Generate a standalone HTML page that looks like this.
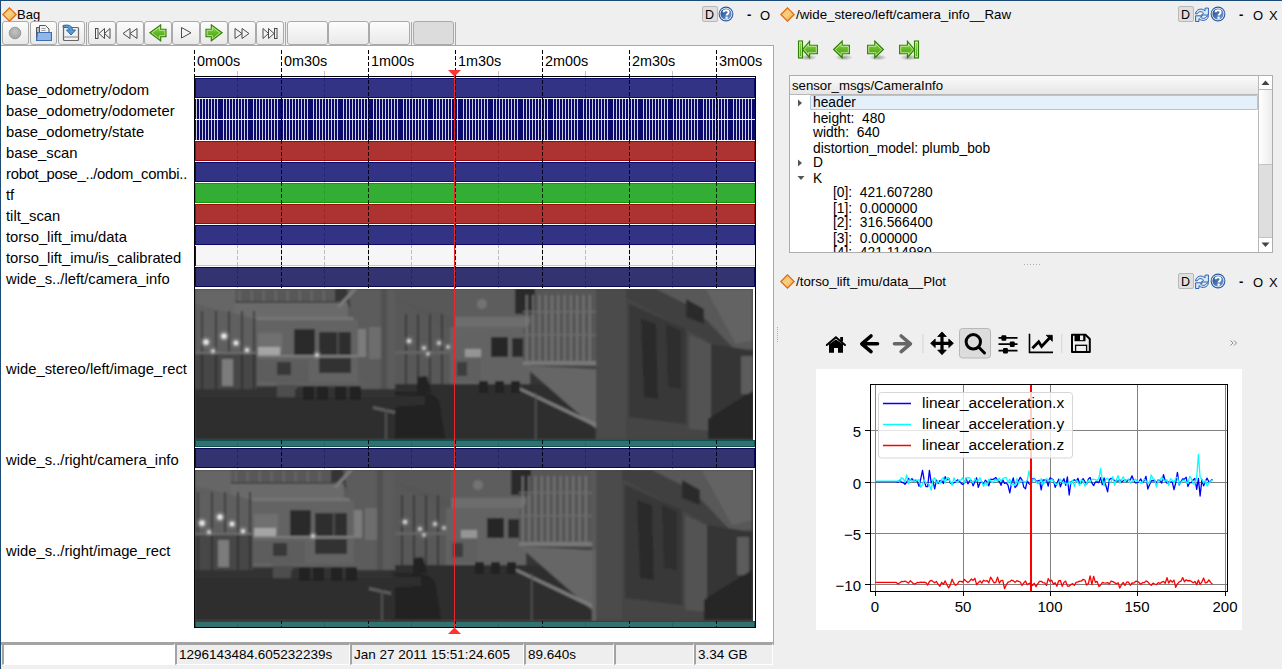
<!DOCTYPE html>
<html><head><meta charset="utf-8">
<style>
*{box-sizing:border-box}
html,body{margin:0;padding:0}
body{width:1282px;height:669px;background:#efefef;position:relative;overflow:hidden;font-family:"Liberation Sans",sans-serif;color:#000}
.a{position:absolute}
.t{position:absolute;white-space:pre;line-height:1}
.btn{position:absolute;top:21px;height:24px;border:1px solid #aaaaaa;border-radius:3px;background:linear-gradient(#fcfcfc,#e9e9e9)}
.lbl{position:absolute;left:6px;font-size:14.8px;white-space:pre;line-height:1}
.sf{position:absolute;top:643px;height:22px;border-top:2px solid #a3a3a3;border-left:2px solid #a3a3a3;border-right:1px solid #fff;border-bottom:1px solid #fff;background:#eeeeee;font-size:13.5px;white-space:pre;line-height:1}
.sf span{position:absolute;left:2px;top:3px}
</style></head><body>

<svg width="0" height="0" style="position:absolute"><defs><linearGradient id="gg" x1="0" y1="0" x2="0" y2="1"><stop offset="0" stop-color="#8ad34a"/><stop offset="0.5" stop-color="#52a81a"/><stop offset="1" stop-color="#3c8c0c"/></linearGradient><linearGradient id="gg2" x1="0" y1="0" x2="0" y2="1"><stop offset="0" stop-color="#94dc55"/><stop offset="0.55" stop-color="#5fb324"/><stop offset="1" stop-color="#489a12"/></linearGradient><radialGradient id="shd" cx="0.5" cy="0.5" r="0.5"><stop offset="0" stop-color="#000" stop-opacity="0.35"/><stop offset="1" stop-color="#000" stop-opacity="0"/></radialGradient></defs></svg>
<div class="a" style="left:0;top:0;width:1282px;height:1px;background:#1d4b77"></div>
<div class="a" style="left:0;top:0;width:1px;height:669px;background:#1d4b77"></div>
<svg class="a" style="left:2px;top:7px" width="15" height="15" viewBox="0 0 15 15"><defs><linearGradient id="dg" x1="0" y1="0" x2="1" y2="1"><stop offset="0" stop-color="#f6b94a"/><stop offset="0.5" stop-color="#f8cf86"/><stop offset="1" stop-color="#ee9d2a"/></linearGradient></defs><path d="M7.5 0.8 L14.2 7.5 L7.5 14.2 L0.8 7.5 Z" fill="url(#dg)" stroke="#dc6a12" stroke-width="1.2"/></svg>
<div class="t" style="left:17px;top:8px;font-size:13px;letter-spacing:0px">Bag</div>
<div class="btn" style="left:2px;width:27px;"></div>
<div class="btn" style="left:30px;width:27px;"></div>
<div class="btn" style="left:58px;width:27px;"></div>
<div class="btn" style="left:88px;width:28px;"></div>
<div class="btn" style="left:116px;width:28px;"></div>
<div class="btn" style="left:144px;width:28px;"></div>
<div class="btn" style="left:172px;width:28px;"></div>
<div class="btn" style="left:200px;width:28px;"></div>
<div class="btn" style="left:228px;width:28px;"></div>
<div class="btn" style="left:256px;width:28px;"></div>
<div class="btn" style="left:287px;width:41px;"></div>
<div class="btn" style="left:328px;width:41px;"></div>
<div class="btn" style="left:369px;width:41px;"></div>
<div class="btn" style="left:413px;width:41px;background:#dcdcdc;"></div>
<div class="a" style="left:86px;top:22px;width:1px;height:23px;background:#a8a8a8"></div>
<div class="a" style="left:285px;top:22px;width:1px;height:23px;background:#a8a8a8"></div>
<div class="a" style="left:411px;top:22px;width:1px;height:23px;background:#a8a8a8"></div>
<div class="a" style="left:455px;top:22px;width:1px;height:23px;background:#a8a8a8"></div>
<svg class="a" style="left:8px;top:26px" width="14" height="14"><defs><radialGradient id="rg" cx="0.5" cy="0.4" r="0.6"><stop offset="0" stop-color="#c4c4c4"/><stop offset="1" stop-color="#a2a2a2"/></radialGradient></defs><circle cx="7" cy="7" r="5.8" fill="url(#rg)" stroke="#9a9a9a" stroke-width="1"/></svg>
<svg class="a" style="left:35px;top:24px" width="17" height="18"><path d="M1.5 3.5 h3 v12 h-3 z" fill="#bdbdbd" stroke="#555" stroke-width="1"/><path d="M4.5 1.5 h6 l3.5 3.5 v5 h-9.5 z" fill="#f4f4f4" stroke="#555" stroke-width="1"/><path d="M6.5 4.5 h4 M6.5 6.5 h4" stroke="#888" stroke-width="0.8"/><path d="M1.5 16.5 L2.5 8.5 h14 v8 z" fill="#93b6e3" stroke="#3a6fb8" stroke-width="1.2"/></svg>
<svg class="a" style="left:62px;top:24px" width="18" height="18"><rect x="1.5" y="3.5" width="15" height="13" rx="1" fill="#f0f0f0" stroke="#666" stroke-width="1.2"/><path d="M2 13 h14" stroke="#bbb" stroke-width="2"/><path d="M1 1.5 C6 0.5 10 1 10.5 6 L13.5 6 L9 11 L4.5 6 L7.5 6 C7 3.5 4 3 1 3.5 Z" fill="#5a9bd0" stroke="#2a6aa5" stroke-width="1"/></svg>
<svg class="a" style="left:94px;top:27px;overflow:visible" width="16" height="13" viewBox="0 0 16 13"><rect x="1.5" y="1.5" width="2.5" height="10" fill="#f4f4f4" stroke="#4a4a4a" stroke-width="1"/><path d="M5 6.5 L10.5 1.5 L10.5 11.5 Z" fill="#f4f4f4" stroke="#4a4a4a" stroke-width="1"/><path d="M10.5 6.5 L16 1.5 L16 11.5 Z" fill="#f4f4f4" stroke="#4a4a4a" stroke-width="1"/></svg>
<svg class="a" style="left:122px;top:27px;overflow:visible" width="16" height="13" viewBox="0 0 16 13"><path d="M1 6.5 L8 1.5 L8 11.5 Z" fill="#f4f4f4" stroke="#4a4a4a" stroke-width="1"/><path d="M8 6.5 L15 1.5 L15 11.5 Z" fill="#f4f4f4" stroke="#4a4a4a" stroke-width="1"/></svg>
<svg class="a" style="left:149px;top:24px;overflow:visible" width="18" height="18" viewBox="0 0 18 18"><path d="M0.9 8.8 L11.7 0.9 L11.7 5.2 L17 5.2 L17 12.7 L11.7 12.7 L11.7 17 Z" fill="url(#gg2)" stroke="#2f7f05" stroke-width="1.1"/><path d="M2.8 8.8 L10.6 3.1 L10.6 6.3 L15.9 6.3 L15.9 11.6 L10.6 11.6 L10.6 14.8 Z" fill="none" stroke="#c9f2a2" stroke-width="0.9" opacity="0.85"/></svg>
<svg class="a" style="left:180px;top:26px;overflow:visible" width="12" height="13" viewBox="0 0 12 13"><path d="M11 6.75 L1.5 1.5 L1.5 12 Z" fill="#f4f4f4" stroke="#4a4a4a" stroke-width="1"/></svg>
<svg class="a" style="left:205px;top:24px;overflow:visible" width="18" height="18" viewBox="0 0 18 18"><path d="M17.1 8.8 L6.3 0.9 L6.3 5.2 L1 5.2 L1 12.7 L6.3 12.7 L6.3 17 Z" fill="url(#gg2)" stroke="#2f7f05" stroke-width="1.1"/><path d="M15.2 8.8 L7.4 3.1 L7.4 6.3 L2.1 6.3 L2.1 11.6 L7.4 11.6 L7.4 14.8 Z" fill="none" stroke="#c9f2a2" stroke-width="0.9" opacity="0.85"/></svg>
<svg class="a" style="left:234px;top:27px;overflow:visible" width="16" height="13" viewBox="0 0 16 13"><path d="M8 6.5 L1 1.5 L1 11.5 Z" fill="#f4f4f4" stroke="#4a4a4a" stroke-width="1"/><path d="M15 6.5 L8 1.5 L8 11.5 Z" fill="#f4f4f4" stroke="#4a4a4a" stroke-width="1"/></svg>
<svg class="a" style="left:262px;top:27px;overflow:visible" width="16" height="13" viewBox="0 0 16 13"><path d="M6.5 6.5 L1 1.5 L1 11.5 Z" fill="#f4f4f4" stroke="#4a4a4a" stroke-width="1"/><path d="M12 6.5 L6.5 1.5 L6.5 11.5 Z" fill="#f4f4f4" stroke="#4a4a4a" stroke-width="1"/><rect x="12.5" y="1.5" width="2.5" height="10" fill="#f4f4f4" stroke="#4a4a4a" stroke-width="1"/></svg>
<div class="a" style="left:1px;top:45px;width:773px;height:600px;background:#fff;border-top:1px solid #a8a8a8;border-right:1px solid #a8a8a8;border-bottom:3px solid #a3a3a3"></div>
<div class="t" style="left:197px;top:54px;font-size:14.4px">0m00s</div>
<div class="t" style="left:284px;top:54px;font-size:14.4px">0m30s</div>
<div class="t" style="left:371px;top:54px;font-size:14.4px">1m00s</div>
<div class="t" style="left:458px;top:54px;font-size:14.4px">1m30s</div>
<div class="t" style="left:545px;top:54px;font-size:14.4px">2m00s</div>
<div class="t" style="left:632px;top:54px;font-size:14.4px">2m30s</div>
<div class="t" style="left:719px;top:54px;font-size:14.4px">3m00s</div>
<svg class="a" style="left:0;top:0" width="1282" height="669"><rect x="237" y="71" width="1" height="5" fill="#c4c4c4"/><line x1="237.5" y1="77" x2="237.5" y2="628" stroke="#bdbdbd" stroke-width="1" stroke-dasharray="4 2"/><rect x="324" y="71" width="1" height="5" fill="#c4c4c4"/><line x1="324.5" y1="77" x2="324.5" y2="628" stroke="#bdbdbd" stroke-width="1" stroke-dasharray="4 2"/><rect x="411" y="71" width="1" height="5" fill="#c4c4c4"/><line x1="411.5" y1="77" x2="411.5" y2="628" stroke="#bdbdbd" stroke-width="1" stroke-dasharray="4 2"/><rect x="498" y="71" width="1" height="5" fill="#c4c4c4"/><line x1="498.5" y1="77" x2="498.5" y2="628" stroke="#bdbdbd" stroke-width="1" stroke-dasharray="4 2"/><rect x="585" y="71" width="1" height="5" fill="#c4c4c4"/><line x1="585.5" y1="77" x2="585.5" y2="628" stroke="#bdbdbd" stroke-width="1" stroke-dasharray="4 2"/><rect x="672" y="71" width="1" height="5" fill="#c4c4c4"/><line x1="672.5" y1="77" x2="672.5" y2="628" stroke="#bdbdbd" stroke-width="1" stroke-dasharray="4 2"/><line x1="194.5" y1="50" x2="194.5" y2="628" stroke="#000" stroke-width="1" stroke-dasharray="4 2"/><line x1="281.5" y1="50" x2="281.5" y2="628" stroke="#000" stroke-width="1" stroke-dasharray="4 2"/><line x1="368.5" y1="50" x2="368.5" y2="628" stroke="#000" stroke-width="1" stroke-dasharray="4 2"/><line x1="455.5" y1="50" x2="455.5" y2="628" stroke="#000" stroke-width="1" stroke-dasharray="4 2"/><line x1="542.5" y1="50" x2="542.5" y2="628" stroke="#000" stroke-width="1" stroke-dasharray="4 2"/><line x1="629.5" y1="50" x2="629.5" y2="628" stroke="#000" stroke-width="1" stroke-dasharray="4 2"/><line x1="716.5" y1="50" x2="716.5" y2="628" stroke="#000" stroke-width="1" stroke-dasharray="4 2"/></svg>
<div class="lbl" style="top:83px;letter-spacing:0px">base_odometry/odom</div>
<div class="a" style="left:195px;top:78px;width:560px;height:20px;background:rgba(0,0,102,0.8);box-shadow:inset 0 0 0 1px rgba(0,0,102,0.8)"></div>
<div class="lbl" style="top:104px;letter-spacing:0px">base_odometry/odometer</div>
<svg class="a" style="left:195px;top:99px" width="560" height="20"><rect x="0" y="0" width="560" height="20" fill="rgba(0,0,102,0.96)"/><rect x="1" y="0" width="1" height="20" fill="rgba(255,255,255,0.8)"/><rect x="4" y="0" width="1" height="20" fill="rgba(255,255,255,0.8)"/><rect x="7" y="0" width="1" height="20" fill="rgba(255,255,255,0.8)"/><rect x="10" y="0" width="1" height="20" fill="rgba(255,255,255,0.8)"/><rect x="13" y="0" width="1" height="20" fill="rgba(255,255,255,0.8)"/><rect x="16" y="0" width="1" height="20" fill="rgba(255,255,255,0.8)"/><rect x="19" y="0" width="1" height="20" fill="rgba(255,255,255,0.8)"/><rect x="22" y="0" width="1" height="20" fill="rgba(255,255,255,0.8)"/><rect x="28" y="0" width="1" height="20" fill="rgba(255,255,255,0.8)"/><rect x="31" y="0" width="1" height="20" fill="rgba(255,255,255,0.8)"/><rect x="34" y="0" width="1" height="20" fill="rgba(255,255,255,0.8)"/><rect x="37" y="0" width="1" height="20" fill="rgba(255,255,255,0.8)"/><rect x="40" y="0" width="1" height="20" fill="rgba(255,255,255,0.8)"/><rect x="43" y="0" width="1" height="20" fill="rgba(255,255,255,0.8)"/><rect x="46" y="0" width="1" height="20" fill="rgba(255,255,255,0.8)"/><rect x="49" y="0" width="1" height="20" fill="rgba(255,255,255,0.8)"/><rect x="52" y="0" width="1" height="20" fill="rgba(255,255,255,0.8)"/><rect x="58" y="0" width="1" height="20" fill="rgba(255,255,255,0.8)"/><rect x="61" y="0" width="1" height="20" fill="rgba(255,255,255,0.8)"/><rect x="64" y="0" width="1" height="20" fill="rgba(255,255,255,0.8)"/><rect x="67" y="0" width="1" height="20" fill="rgba(255,255,255,0.8)"/><rect x="70" y="0" width="1" height="20" fill="rgba(255,255,255,0.8)"/><rect x="73" y="0" width="1" height="20" fill="rgba(255,255,255,0.8)"/><rect x="76" y="0" width="1" height="20" fill="rgba(255,255,255,0.8)"/><rect x="79" y="0" width="1" height="20" fill="rgba(255,255,255,0.8)"/><rect x="82" y="0" width="1" height="20" fill="rgba(255,255,255,0.8)"/><rect x="88" y="0" width="1" height="20" fill="rgba(255,255,255,0.8)"/><rect x="91" y="0" width="1" height="20" fill="rgba(255,255,255,0.8)"/><rect x="94" y="0" width="1" height="20" fill="rgba(255,255,255,0.8)"/><rect x="97" y="0" width="1" height="20" fill="rgba(255,255,255,0.8)"/><rect x="100" y="0" width="1" height="20" fill="rgba(255,255,255,0.8)"/><rect x="103" y="0" width="1" height="20" fill="rgba(255,255,255,0.8)"/><rect x="106" y="0" width="1" height="20" fill="rgba(255,255,255,0.8)"/><rect x="109" y="0" width="1" height="20" fill="rgba(255,255,255,0.8)"/><rect x="112" y="0" width="1" height="20" fill="rgba(255,255,255,0.8)"/><rect x="118" y="0" width="1" height="20" fill="rgba(255,255,255,0.8)"/><rect x="121" y="0" width="1" height="20" fill="rgba(255,255,255,0.8)"/><rect x="124" y="0" width="1" height="20" fill="rgba(255,255,255,0.8)"/><rect x="127" y="0" width="1" height="20" fill="rgba(255,255,255,0.8)"/><rect x="130" y="0" width="1" height="20" fill="rgba(255,255,255,0.8)"/><rect x="133" y="0" width="1" height="20" fill="rgba(255,255,255,0.8)"/><rect x="136" y="0" width="1" height="20" fill="rgba(255,255,255,0.8)"/><rect x="139" y="0" width="1" height="20" fill="rgba(255,255,255,0.8)"/><rect x="142" y="0" width="1" height="20" fill="rgba(255,255,255,0.8)"/><rect x="148" y="0" width="1" height="20" fill="rgba(255,255,255,0.8)"/><rect x="151" y="0" width="1" height="20" fill="rgba(255,255,255,0.8)"/><rect x="154" y="0" width="1" height="20" fill="rgba(255,255,255,0.8)"/><rect x="157" y="0" width="1" height="20" fill="rgba(255,255,255,0.8)"/><rect x="160" y="0" width="1" height="20" fill="rgba(255,255,255,0.8)"/><rect x="163" y="0" width="1" height="20" fill="rgba(255,255,255,0.8)"/><rect x="166" y="0" width="1" height="20" fill="rgba(255,255,255,0.8)"/><rect x="169" y="0" width="1" height="20" fill="rgba(255,255,255,0.8)"/><rect x="172" y="0" width="1" height="20" fill="rgba(255,255,255,0.8)"/><rect x="178" y="0" width="1" height="20" fill="rgba(255,255,255,0.8)"/><rect x="181" y="0" width="1" height="20" fill="rgba(255,255,255,0.8)"/><rect x="184" y="0" width="1" height="20" fill="rgba(255,255,255,0.8)"/><rect x="187" y="0" width="1" height="20" fill="rgba(255,255,255,0.8)"/><rect x="190" y="0" width="1" height="20" fill="rgba(255,255,255,0.8)"/><rect x="193" y="0" width="1" height="20" fill="rgba(255,255,255,0.8)"/><rect x="196" y="0" width="1" height="20" fill="rgba(255,255,255,0.8)"/><rect x="199" y="0" width="1" height="20" fill="rgba(255,255,255,0.8)"/><rect x="202" y="0" width="1" height="20" fill="rgba(255,255,255,0.8)"/><rect x="208" y="0" width="1" height="20" fill="rgba(255,255,255,0.8)"/><rect x="211" y="0" width="1" height="20" fill="rgba(255,255,255,0.8)"/><rect x="214" y="0" width="1" height="20" fill="rgba(255,255,255,0.8)"/><rect x="217" y="0" width="1" height="20" fill="rgba(255,255,255,0.8)"/><rect x="220" y="0" width="1" height="20" fill="rgba(255,255,255,0.8)"/><rect x="223" y="0" width="1" height="20" fill="rgba(255,255,255,0.8)"/><rect x="226" y="0" width="1" height="20" fill="rgba(255,255,255,0.8)"/><rect x="229" y="0" width="1" height="20" fill="rgba(255,255,255,0.8)"/><rect x="232" y="0" width="1" height="20" fill="rgba(255,255,255,0.8)"/><rect x="238" y="0" width="1" height="20" fill="rgba(255,255,255,0.8)"/><rect x="241" y="0" width="1" height="20" fill="rgba(255,255,255,0.8)"/><rect x="244" y="0" width="1" height="20" fill="rgba(255,255,255,0.8)"/><rect x="247" y="0" width="1" height="20" fill="rgba(255,255,255,0.8)"/><rect x="250" y="0" width="1" height="20" fill="rgba(255,255,255,0.8)"/><rect x="253" y="0" width="1" height="20" fill="rgba(255,255,255,0.8)"/><rect x="256" y="0" width="1" height="20" fill="rgba(255,255,255,0.8)"/><rect x="259" y="0" width="1" height="20" fill="rgba(255,255,255,0.8)"/><rect x="262" y="0" width="1" height="20" fill="rgba(255,255,255,0.8)"/><rect x="268" y="0" width="1" height="20" fill="rgba(255,255,255,0.8)"/><rect x="271" y="0" width="1" height="20" fill="rgba(255,255,255,0.8)"/><rect x="274" y="0" width="1" height="20" fill="rgba(255,255,255,0.8)"/><rect x="277" y="0" width="1" height="20" fill="rgba(255,255,255,0.8)"/><rect x="280" y="0" width="1" height="20" fill="rgba(255,255,255,0.8)"/><rect x="283" y="0" width="1" height="20" fill="rgba(255,255,255,0.8)"/><rect x="286" y="0" width="1" height="20" fill="rgba(255,255,255,0.8)"/><rect x="289" y="0" width="1" height="20" fill="rgba(255,255,255,0.8)"/><rect x="292" y="0" width="1" height="20" fill="rgba(255,255,255,0.8)"/><rect x="298" y="0" width="1" height="20" fill="rgba(255,255,255,0.8)"/><rect x="301" y="0" width="1" height="20" fill="rgba(255,255,255,0.8)"/><rect x="304" y="0" width="1" height="20" fill="rgba(255,255,255,0.8)"/><rect x="307" y="0" width="1" height="20" fill="rgba(255,255,255,0.8)"/><rect x="310" y="0" width="1" height="20" fill="rgba(255,255,255,0.8)"/><rect x="313" y="0" width="1" height="20" fill="rgba(255,255,255,0.8)"/><rect x="316" y="0" width="1" height="20" fill="rgba(255,255,255,0.8)"/><rect x="319" y="0" width="1" height="20" fill="rgba(255,255,255,0.8)"/><rect x="322" y="0" width="1" height="20" fill="rgba(255,255,255,0.8)"/><rect x="328" y="0" width="1" height="20" fill="rgba(255,255,255,0.8)"/><rect x="331" y="0" width="1" height="20" fill="rgba(255,255,255,0.8)"/><rect x="334" y="0" width="1" height="20" fill="rgba(255,255,255,0.8)"/><rect x="337" y="0" width="1" height="20" fill="rgba(255,255,255,0.8)"/><rect x="340" y="0" width="1" height="20" fill="rgba(255,255,255,0.8)"/><rect x="343" y="0" width="1" height="20" fill="rgba(255,255,255,0.8)"/><rect x="346" y="0" width="1" height="20" fill="rgba(255,255,255,0.8)"/><rect x="349" y="0" width="1" height="20" fill="rgba(255,255,255,0.8)"/><rect x="352" y="0" width="1" height="20" fill="rgba(255,255,255,0.8)"/><rect x="358" y="0" width="1" height="20" fill="rgba(255,255,255,0.8)"/><rect x="361" y="0" width="1" height="20" fill="rgba(255,255,255,0.8)"/><rect x="364" y="0" width="1" height="20" fill="rgba(255,255,255,0.8)"/><rect x="367" y="0" width="1" height="20" fill="rgba(255,255,255,0.8)"/><rect x="370" y="0" width="1" height="20" fill="rgba(255,255,255,0.8)"/><rect x="373" y="0" width="1" height="20" fill="rgba(255,255,255,0.8)"/><rect x="376" y="0" width="1" height="20" fill="rgba(255,255,255,0.8)"/><rect x="379" y="0" width="1" height="20" fill="rgba(255,255,255,0.8)"/><rect x="382" y="0" width="1" height="20" fill="rgba(255,255,255,0.8)"/><rect x="388" y="0" width="1" height="20" fill="rgba(255,255,255,0.8)"/><rect x="391" y="0" width="1" height="20" fill="rgba(255,255,255,0.8)"/><rect x="394" y="0" width="1" height="20" fill="rgba(255,255,255,0.8)"/><rect x="397" y="0" width="1" height="20" fill="rgba(255,255,255,0.8)"/><rect x="400" y="0" width="1" height="20" fill="rgba(255,255,255,0.8)"/><rect x="403" y="0" width="1" height="20" fill="rgba(255,255,255,0.8)"/><rect x="406" y="0" width="1" height="20" fill="rgba(255,255,255,0.8)"/><rect x="409" y="0" width="1" height="20" fill="rgba(255,255,255,0.8)"/><rect x="412" y="0" width="1" height="20" fill="rgba(255,255,255,0.8)"/><rect x="418" y="0" width="1" height="20" fill="rgba(255,255,255,0.8)"/><rect x="421" y="0" width="1" height="20" fill="rgba(255,255,255,0.8)"/><rect x="424" y="0" width="1" height="20" fill="rgba(255,255,255,0.8)"/><rect x="427" y="0" width="1" height="20" fill="rgba(255,255,255,0.8)"/><rect x="430" y="0" width="1" height="20" fill="rgba(255,255,255,0.8)"/><rect x="433" y="0" width="1" height="20" fill="rgba(255,255,255,0.8)"/><rect x="436" y="0" width="1" height="20" fill="rgba(255,255,255,0.8)"/><rect x="439" y="0" width="1" height="20" fill="rgba(255,255,255,0.8)"/><rect x="442" y="0" width="1" height="20" fill="rgba(255,255,255,0.8)"/><rect x="448" y="0" width="1" height="20" fill="rgba(255,255,255,0.8)"/><rect x="451" y="0" width="1" height="20" fill="rgba(255,255,255,0.8)"/><rect x="454" y="0" width="1" height="20" fill="rgba(255,255,255,0.8)"/><rect x="457" y="0" width="1" height="20" fill="rgba(255,255,255,0.8)"/><rect x="460" y="0" width="1" height="20" fill="rgba(255,255,255,0.8)"/><rect x="463" y="0" width="1" height="20" fill="rgba(255,255,255,0.8)"/><rect x="466" y="0" width="1" height="20" fill="rgba(255,255,255,0.8)"/><rect x="469" y="0" width="1" height="20" fill="rgba(255,255,255,0.8)"/><rect x="472" y="0" width="1" height="20" fill="rgba(255,255,255,0.8)"/><rect x="478" y="0" width="1" height="20" fill="rgba(255,255,255,0.8)"/><rect x="481" y="0" width="1" height="20" fill="rgba(255,255,255,0.8)"/><rect x="484" y="0" width="1" height="20" fill="rgba(255,255,255,0.8)"/><rect x="487" y="0" width="1" height="20" fill="rgba(255,255,255,0.8)"/><rect x="490" y="0" width="1" height="20" fill="rgba(255,255,255,0.8)"/><rect x="493" y="0" width="1" height="20" fill="rgba(255,255,255,0.8)"/><rect x="496" y="0" width="1" height="20" fill="rgba(255,255,255,0.8)"/><rect x="499" y="0" width="1" height="20" fill="rgba(255,255,255,0.8)"/><rect x="502" y="0" width="1" height="20" fill="rgba(255,255,255,0.8)"/><rect x="508" y="0" width="1" height="20" fill="rgba(255,255,255,0.8)"/><rect x="511" y="0" width="1" height="20" fill="rgba(255,255,255,0.8)"/><rect x="514" y="0" width="1" height="20" fill="rgba(255,255,255,0.8)"/><rect x="517" y="0" width="1" height="20" fill="rgba(255,255,255,0.8)"/><rect x="520" y="0" width="1" height="20" fill="rgba(255,255,255,0.8)"/><rect x="523" y="0" width="1" height="20" fill="rgba(255,255,255,0.8)"/><rect x="526" y="0" width="1" height="20" fill="rgba(255,255,255,0.8)"/><rect x="529" y="0" width="1" height="20" fill="rgba(255,255,255,0.8)"/><rect x="532" y="0" width="1" height="20" fill="rgba(255,255,255,0.8)"/><rect x="538" y="0" width="1" height="20" fill="rgba(255,255,255,0.8)"/><rect x="541" y="0" width="1" height="20" fill="rgba(255,255,255,0.8)"/><rect x="544" y="0" width="1" height="20" fill="rgba(255,255,255,0.8)"/><rect x="547" y="0" width="1" height="20" fill="rgba(255,255,255,0.8)"/><rect x="550" y="0" width="1" height="20" fill="rgba(255,255,255,0.8)"/><rect x="553" y="0" width="1" height="20" fill="rgba(255,255,255,0.8)"/><rect x="556" y="0" width="1" height="20" fill="rgba(255,255,255,0.8)"/></svg>
<div class="lbl" style="top:125px;letter-spacing:0px">base_odometry/state</div>
<svg class="a" style="left:195px;top:120px" width="560" height="20"><rect x="0" y="0" width="560" height="20" fill="rgba(0,0,102,0.96)"/><rect x="1" y="0" width="1" height="20" fill="rgba(255,255,255,0.8)"/><rect x="4" y="0" width="1" height="20" fill="rgba(255,255,255,0.8)"/><rect x="7" y="0" width="1" height="20" fill="rgba(255,255,255,0.8)"/><rect x="10" y="0" width="1" height="20" fill="rgba(255,255,255,0.8)"/><rect x="13" y="0" width="1" height="20" fill="rgba(255,255,255,0.8)"/><rect x="16" y="0" width="1" height="20" fill="rgba(255,255,255,0.8)"/><rect x="19" y="0" width="1" height="20" fill="rgba(255,255,255,0.8)"/><rect x="22" y="0" width="1" height="20" fill="rgba(255,255,255,0.8)"/><rect x="28" y="0" width="1" height="20" fill="rgba(255,255,255,0.8)"/><rect x="31" y="0" width="1" height="20" fill="rgba(255,255,255,0.8)"/><rect x="34" y="0" width="1" height="20" fill="rgba(255,255,255,0.8)"/><rect x="37" y="0" width="1" height="20" fill="rgba(255,255,255,0.8)"/><rect x="40" y="0" width="1" height="20" fill="rgba(255,255,255,0.8)"/><rect x="43" y="0" width="1" height="20" fill="rgba(255,255,255,0.8)"/><rect x="46" y="0" width="1" height="20" fill="rgba(255,255,255,0.8)"/><rect x="49" y="0" width="1" height="20" fill="rgba(255,255,255,0.8)"/><rect x="52" y="0" width="1" height="20" fill="rgba(255,255,255,0.8)"/><rect x="58" y="0" width="1" height="20" fill="rgba(255,255,255,0.8)"/><rect x="61" y="0" width="1" height="20" fill="rgba(255,255,255,0.8)"/><rect x="64" y="0" width="1" height="20" fill="rgba(255,255,255,0.8)"/><rect x="67" y="0" width="1" height="20" fill="rgba(255,255,255,0.8)"/><rect x="70" y="0" width="1" height="20" fill="rgba(255,255,255,0.8)"/><rect x="73" y="0" width="1" height="20" fill="rgba(255,255,255,0.8)"/><rect x="76" y="0" width="1" height="20" fill="rgba(255,255,255,0.8)"/><rect x="79" y="0" width="1" height="20" fill="rgba(255,255,255,0.8)"/><rect x="82" y="0" width="1" height="20" fill="rgba(255,255,255,0.8)"/><rect x="88" y="0" width="1" height="20" fill="rgba(255,255,255,0.8)"/><rect x="91" y="0" width="1" height="20" fill="rgba(255,255,255,0.8)"/><rect x="94" y="0" width="1" height="20" fill="rgba(255,255,255,0.8)"/><rect x="97" y="0" width="1" height="20" fill="rgba(255,255,255,0.8)"/><rect x="100" y="0" width="1" height="20" fill="rgba(255,255,255,0.8)"/><rect x="103" y="0" width="1" height="20" fill="rgba(255,255,255,0.8)"/><rect x="106" y="0" width="1" height="20" fill="rgba(255,255,255,0.8)"/><rect x="109" y="0" width="1" height="20" fill="rgba(255,255,255,0.8)"/><rect x="112" y="0" width="1" height="20" fill="rgba(255,255,255,0.8)"/><rect x="118" y="0" width="1" height="20" fill="rgba(255,255,255,0.8)"/><rect x="121" y="0" width="1" height="20" fill="rgba(255,255,255,0.8)"/><rect x="124" y="0" width="1" height="20" fill="rgba(255,255,255,0.8)"/><rect x="127" y="0" width="1" height="20" fill="rgba(255,255,255,0.8)"/><rect x="130" y="0" width="1" height="20" fill="rgba(255,255,255,0.8)"/><rect x="133" y="0" width="1" height="20" fill="rgba(255,255,255,0.8)"/><rect x="136" y="0" width="1" height="20" fill="rgba(255,255,255,0.8)"/><rect x="139" y="0" width="1" height="20" fill="rgba(255,255,255,0.8)"/><rect x="142" y="0" width="1" height="20" fill="rgba(255,255,255,0.8)"/><rect x="148" y="0" width="1" height="20" fill="rgba(255,255,255,0.8)"/><rect x="151" y="0" width="1" height="20" fill="rgba(255,255,255,0.8)"/><rect x="154" y="0" width="1" height="20" fill="rgba(255,255,255,0.8)"/><rect x="157" y="0" width="1" height="20" fill="rgba(255,255,255,0.8)"/><rect x="160" y="0" width="1" height="20" fill="rgba(255,255,255,0.8)"/><rect x="163" y="0" width="1" height="20" fill="rgba(255,255,255,0.8)"/><rect x="166" y="0" width="1" height="20" fill="rgba(255,255,255,0.8)"/><rect x="169" y="0" width="1" height="20" fill="rgba(255,255,255,0.8)"/><rect x="172" y="0" width="1" height="20" fill="rgba(255,255,255,0.8)"/><rect x="178" y="0" width="1" height="20" fill="rgba(255,255,255,0.8)"/><rect x="181" y="0" width="1" height="20" fill="rgba(255,255,255,0.8)"/><rect x="184" y="0" width="1" height="20" fill="rgba(255,255,255,0.8)"/><rect x="187" y="0" width="1" height="20" fill="rgba(255,255,255,0.8)"/><rect x="190" y="0" width="1" height="20" fill="rgba(255,255,255,0.8)"/><rect x="193" y="0" width="1" height="20" fill="rgba(255,255,255,0.8)"/><rect x="196" y="0" width="1" height="20" fill="rgba(255,255,255,0.8)"/><rect x="199" y="0" width="1" height="20" fill="rgba(255,255,255,0.8)"/><rect x="202" y="0" width="1" height="20" fill="rgba(255,255,255,0.8)"/><rect x="208" y="0" width="1" height="20" fill="rgba(255,255,255,0.8)"/><rect x="211" y="0" width="1" height="20" fill="rgba(255,255,255,0.8)"/><rect x="214" y="0" width="1" height="20" fill="rgba(255,255,255,0.8)"/><rect x="217" y="0" width="1" height="20" fill="rgba(255,255,255,0.8)"/><rect x="220" y="0" width="1" height="20" fill="rgba(255,255,255,0.8)"/><rect x="223" y="0" width="1" height="20" fill="rgba(255,255,255,0.8)"/><rect x="226" y="0" width="1" height="20" fill="rgba(255,255,255,0.8)"/><rect x="229" y="0" width="1" height="20" fill="rgba(255,255,255,0.8)"/><rect x="232" y="0" width="1" height="20" fill="rgba(255,255,255,0.8)"/><rect x="238" y="0" width="1" height="20" fill="rgba(255,255,255,0.8)"/><rect x="241" y="0" width="1" height="20" fill="rgba(255,255,255,0.8)"/><rect x="244" y="0" width="1" height="20" fill="rgba(255,255,255,0.8)"/><rect x="247" y="0" width="1" height="20" fill="rgba(255,255,255,0.8)"/><rect x="250" y="0" width="1" height="20" fill="rgba(255,255,255,0.8)"/><rect x="253" y="0" width="1" height="20" fill="rgba(255,255,255,0.8)"/><rect x="256" y="0" width="1" height="20" fill="rgba(255,255,255,0.8)"/><rect x="259" y="0" width="1" height="20" fill="rgba(255,255,255,0.8)"/><rect x="262" y="0" width="1" height="20" fill="rgba(255,255,255,0.8)"/><rect x="268" y="0" width="1" height="20" fill="rgba(255,255,255,0.8)"/><rect x="271" y="0" width="1" height="20" fill="rgba(255,255,255,0.8)"/><rect x="274" y="0" width="1" height="20" fill="rgba(255,255,255,0.8)"/><rect x="277" y="0" width="1" height="20" fill="rgba(255,255,255,0.8)"/><rect x="280" y="0" width="1" height="20" fill="rgba(255,255,255,0.8)"/><rect x="283" y="0" width="1" height="20" fill="rgba(255,255,255,0.8)"/><rect x="286" y="0" width="1" height="20" fill="rgba(255,255,255,0.8)"/><rect x="289" y="0" width="1" height="20" fill="rgba(255,255,255,0.8)"/><rect x="292" y="0" width="1" height="20" fill="rgba(255,255,255,0.8)"/><rect x="298" y="0" width="1" height="20" fill="rgba(255,255,255,0.8)"/><rect x="301" y="0" width="1" height="20" fill="rgba(255,255,255,0.8)"/><rect x="304" y="0" width="1" height="20" fill="rgba(255,255,255,0.8)"/><rect x="307" y="0" width="1" height="20" fill="rgba(255,255,255,0.8)"/><rect x="310" y="0" width="1" height="20" fill="rgba(255,255,255,0.8)"/><rect x="313" y="0" width="1" height="20" fill="rgba(255,255,255,0.8)"/><rect x="316" y="0" width="1" height="20" fill="rgba(255,255,255,0.8)"/><rect x="319" y="0" width="1" height="20" fill="rgba(255,255,255,0.8)"/><rect x="322" y="0" width="1" height="20" fill="rgba(255,255,255,0.8)"/><rect x="328" y="0" width="1" height="20" fill="rgba(255,255,255,0.8)"/><rect x="331" y="0" width="1" height="20" fill="rgba(255,255,255,0.8)"/><rect x="334" y="0" width="1" height="20" fill="rgba(255,255,255,0.8)"/><rect x="337" y="0" width="1" height="20" fill="rgba(255,255,255,0.8)"/><rect x="340" y="0" width="1" height="20" fill="rgba(255,255,255,0.8)"/><rect x="343" y="0" width="1" height="20" fill="rgba(255,255,255,0.8)"/><rect x="346" y="0" width="1" height="20" fill="rgba(255,255,255,0.8)"/><rect x="349" y="0" width="1" height="20" fill="rgba(255,255,255,0.8)"/><rect x="352" y="0" width="1" height="20" fill="rgba(255,255,255,0.8)"/><rect x="358" y="0" width="1" height="20" fill="rgba(255,255,255,0.8)"/><rect x="361" y="0" width="1" height="20" fill="rgba(255,255,255,0.8)"/><rect x="364" y="0" width="1" height="20" fill="rgba(255,255,255,0.8)"/><rect x="367" y="0" width="1" height="20" fill="rgba(255,255,255,0.8)"/><rect x="370" y="0" width="1" height="20" fill="rgba(255,255,255,0.8)"/><rect x="373" y="0" width="1" height="20" fill="rgba(255,255,255,0.8)"/><rect x="376" y="0" width="1" height="20" fill="rgba(255,255,255,0.8)"/><rect x="379" y="0" width="1" height="20" fill="rgba(255,255,255,0.8)"/><rect x="382" y="0" width="1" height="20" fill="rgba(255,255,255,0.8)"/><rect x="388" y="0" width="1" height="20" fill="rgba(255,255,255,0.8)"/><rect x="391" y="0" width="1" height="20" fill="rgba(255,255,255,0.8)"/><rect x="394" y="0" width="1" height="20" fill="rgba(255,255,255,0.8)"/><rect x="397" y="0" width="1" height="20" fill="rgba(255,255,255,0.8)"/><rect x="400" y="0" width="1" height="20" fill="rgba(255,255,255,0.8)"/><rect x="403" y="0" width="1" height="20" fill="rgba(255,255,255,0.8)"/><rect x="406" y="0" width="1" height="20" fill="rgba(255,255,255,0.8)"/><rect x="409" y="0" width="1" height="20" fill="rgba(255,255,255,0.8)"/><rect x="412" y="0" width="1" height="20" fill="rgba(255,255,255,0.8)"/><rect x="418" y="0" width="1" height="20" fill="rgba(255,255,255,0.8)"/><rect x="421" y="0" width="1" height="20" fill="rgba(255,255,255,0.8)"/><rect x="424" y="0" width="1" height="20" fill="rgba(255,255,255,0.8)"/><rect x="427" y="0" width="1" height="20" fill="rgba(255,255,255,0.8)"/><rect x="430" y="0" width="1" height="20" fill="rgba(255,255,255,0.8)"/><rect x="433" y="0" width="1" height="20" fill="rgba(255,255,255,0.8)"/><rect x="436" y="0" width="1" height="20" fill="rgba(255,255,255,0.8)"/><rect x="439" y="0" width="1" height="20" fill="rgba(255,255,255,0.8)"/><rect x="442" y="0" width="1" height="20" fill="rgba(255,255,255,0.8)"/><rect x="448" y="0" width="1" height="20" fill="rgba(255,255,255,0.8)"/><rect x="451" y="0" width="1" height="20" fill="rgba(255,255,255,0.8)"/><rect x="454" y="0" width="1" height="20" fill="rgba(255,255,255,0.8)"/><rect x="457" y="0" width="1" height="20" fill="rgba(255,255,255,0.8)"/><rect x="460" y="0" width="1" height="20" fill="rgba(255,255,255,0.8)"/><rect x="463" y="0" width="1" height="20" fill="rgba(255,255,255,0.8)"/><rect x="466" y="0" width="1" height="20" fill="rgba(255,255,255,0.8)"/><rect x="469" y="0" width="1" height="20" fill="rgba(255,255,255,0.8)"/><rect x="472" y="0" width="1" height="20" fill="rgba(255,255,255,0.8)"/><rect x="478" y="0" width="1" height="20" fill="rgba(255,255,255,0.8)"/><rect x="481" y="0" width="1" height="20" fill="rgba(255,255,255,0.8)"/><rect x="484" y="0" width="1" height="20" fill="rgba(255,255,255,0.8)"/><rect x="487" y="0" width="1" height="20" fill="rgba(255,255,255,0.8)"/><rect x="490" y="0" width="1" height="20" fill="rgba(255,255,255,0.8)"/><rect x="493" y="0" width="1" height="20" fill="rgba(255,255,255,0.8)"/><rect x="496" y="0" width="1" height="20" fill="rgba(255,255,255,0.8)"/><rect x="499" y="0" width="1" height="20" fill="rgba(255,255,255,0.8)"/><rect x="502" y="0" width="1" height="20" fill="rgba(255,255,255,0.8)"/><rect x="508" y="0" width="1" height="20" fill="rgba(255,255,255,0.8)"/><rect x="511" y="0" width="1" height="20" fill="rgba(255,255,255,0.8)"/><rect x="514" y="0" width="1" height="20" fill="rgba(255,255,255,0.8)"/><rect x="517" y="0" width="1" height="20" fill="rgba(255,255,255,0.8)"/><rect x="520" y="0" width="1" height="20" fill="rgba(255,255,255,0.8)"/><rect x="523" y="0" width="1" height="20" fill="rgba(255,255,255,0.8)"/><rect x="526" y="0" width="1" height="20" fill="rgba(255,255,255,0.8)"/><rect x="529" y="0" width="1" height="20" fill="rgba(255,255,255,0.8)"/><rect x="532" y="0" width="1" height="20" fill="rgba(255,255,255,0.8)"/><rect x="538" y="0" width="1" height="20" fill="rgba(255,255,255,0.8)"/><rect x="541" y="0" width="1" height="20" fill="rgba(255,255,255,0.8)"/><rect x="544" y="0" width="1" height="20" fill="rgba(255,255,255,0.8)"/><rect x="547" y="0" width="1" height="20" fill="rgba(255,255,255,0.8)"/><rect x="550" y="0" width="1" height="20" fill="rgba(255,255,255,0.8)"/><rect x="553" y="0" width="1" height="20" fill="rgba(255,255,255,0.8)"/><rect x="556" y="0" width="1" height="20" fill="rgba(255,255,255,0.8)"/></svg>
<div class="lbl" style="top:146px;letter-spacing:0px">base_scan</div>
<div class="a" style="left:195px;top:141px;width:560px;height:20px;background:rgba(153,0,0,0.8);box-shadow:inset 0 0 0 1px rgba(153,0,0,0.8)"></div>
<div class="lbl" style="top:167px;letter-spacing:-0.25px">robot_pose_../odom_combi..</div>
<div class="a" style="left:195px;top:162px;width:560px;height:20px;background:rgba(0,0,102,0.8);box-shadow:inset 0 0 0 1px rgba(0,0,102,0.8)"></div>
<div class="lbl" style="top:188px;letter-spacing:0px">tf</div>
<div class="a" style="left:195px;top:183px;width:560px;height:20px;background:rgba(0,153,0,0.8);box-shadow:inset 0 0 0 1px rgba(0,153,0,0.8)"></div>
<div class="lbl" style="top:209px;letter-spacing:0px">tilt_scan</div>
<div class="a" style="left:195px;top:204px;width:560px;height:20px;background:rgba(153,0,0,0.8);box-shadow:inset 0 0 0 1px rgba(153,0,0,0.8)"></div>
<div class="lbl" style="top:230px;letter-spacing:0px">torso_lift_imu/data</div>
<div class="a" style="left:195px;top:225px;width:560px;height:20px;background:rgba(0,0,102,0.8);box-shadow:inset 0 0 0 1px rgba(0,0,102,0.8)"></div>
<div class="lbl" style="top:251px;letter-spacing:0px">torso_lift_imu/is_calibrated</div>
<div class="a" style="left:195px;top:245px;width:560px;height:21px;background:rgba(245,245,245,0.85);border-bottom:1px solid #c8c8c8"></div>
<div class="a" style="left:195px;top:246px;width:1px;height:20px;background:#0a0a6c"></div>
<div class="lbl" style="top:272px;letter-spacing:0px">wide_s../left/camera_info</div>
<div class="a" style="left:195px;top:267px;width:560px;height:20px;background:rgba(0,0,77,0.8);box-shadow:inset 0 0 0 1px rgba(0,0,77,0.8)"></div>
<svg class="a" style="left:0;top:0" width="1282" height="669"><line x1="194.5" y1="245" x2="194.5" y2="265" stroke="#000" stroke-width="1" stroke-dasharray="4 2" stroke-dashoffset="1"/><line x1="281.5" y1="245" x2="281.5" y2="265" stroke="#000" stroke-width="1" stroke-dasharray="4 2" stroke-dashoffset="1"/><line x1="368.5" y1="245" x2="368.5" y2="265" stroke="#000" stroke-width="1" stroke-dasharray="4 2" stroke-dashoffset="1"/><line x1="455.5" y1="245" x2="455.5" y2="265" stroke="#000" stroke-width="1" stroke-dasharray="4 2" stroke-dashoffset="1"/><line x1="542.5" y1="245" x2="542.5" y2="265" stroke="#000" stroke-width="1" stroke-dasharray="4 2" stroke-dashoffset="1"/><line x1="629.5" y1="245" x2="629.5" y2="265" stroke="#000" stroke-width="1" stroke-dasharray="4 2" stroke-dashoffset="1"/><line x1="716.5" y1="245" x2="716.5" y2="265" stroke="#000" stroke-width="1" stroke-dasharray="4 2" stroke-dashoffset="1"/><line x1="237.5" y1="245" x2="237.5" y2="265" stroke="#bdbdbd" stroke-width="1" stroke-dasharray="4 2" stroke-dashoffset="1"/><line x1="324.5" y1="245" x2="324.5" y2="265" stroke="#bdbdbd" stroke-width="1" stroke-dasharray="4 2" stroke-dashoffset="1"/><line x1="411.5" y1="245" x2="411.5" y2="265" stroke="#bdbdbd" stroke-width="1" stroke-dasharray="4 2" stroke-dashoffset="1"/><line x1="498.5" y1="245" x2="498.5" y2="265" stroke="#bdbdbd" stroke-width="1" stroke-dasharray="4 2" stroke-dashoffset="1"/><line x1="585.5" y1="245" x2="585.5" y2="265" stroke="#bdbdbd" stroke-width="1" stroke-dasharray="4 2" stroke-dashoffset="1"/><line x1="672.5" y1="245" x2="672.5" y2="265" stroke="#bdbdbd" stroke-width="1" stroke-dasharray="4 2" stroke-dashoffset="1"/></svg>
<div class="lbl" style="top:362px">wide_stereo/left/image_rect</div>
<div class="lbl" style="top:453px">wide_s../right/camera_info</div>
<div class="lbl" style="top:544px">wide_s../right/image_rect</div>
<div class="a" style="left:195px;top:288px;width:559px;height:152px;background:#fff"></div>
<div class="a" style="left:195px;top:289px;width:558px;height:151px;background:#444"></div>
<svg class="a" style="left:195px;top:289px" width="558" height="151"><defs><filter id="bl289" x="-5%" y="-5%" width="110%" height="110%"><feGaussianBlur stdDeviation="0.9"/></filter><clipPath id="c1_289"><rect x="0" y="0" width="200" height="151"/></clipPath><clipPath id="c2_289"><rect x="200" y="0" width="201" height="151"/></clipPath><clipPath id="c3_289"><rect x="401" y="0" width="157" height="151"/></clipPath></defs><g filter="url(#bl289)"><g clip-path="url(#c1_289)"><g transform="translate(0,0)"><rect x="0" y="0" width="200" height="150" fill="#343434" /><rect x="0" y="0" width="200" height="35" fill="#5a5a5a" /><path d="M0 0 L40 0 L40 30 L0 18 Z" fill="#666666" /><rect x="40" y="0" width="115" height="13" fill="#585858" /><rect x="44" y="1" width="1.5" height="11" fill="#6c6c6c" /><rect x="56" y="1" width="1.5" height="11" fill="#6c6c6c" /><rect x="68" y="1" width="1.5" height="11" fill="#6c6c6c" /><rect x="80" y="1" width="1.5" height="11" fill="#6c6c6c" /><rect x="92" y="1" width="1.5" height="11" fill="#6c6c6c" /><rect x="104" y="1" width="1.5" height="11" fill="#6c6c6c" /><rect x="116" y="1" width="1.5" height="11" fill="#6c6c6c" /><rect x="128" y="1" width="1.5" height="11" fill="#6c6c6c" /><rect x="140" y="1" width="1.5" height="11" fill="#6c6c6c" /><rect x="140" y="0" width="15" height="18" fill="#363636" /><rect x="40" y="12" width="115" height="2" fill="#444444" /><rect x="40" y="14" width="113" height="17" fill="#6a6a6a" /><rect x="40" y="28" width="125" height="4" fill="#767676" /><path d="M152 0 L200 0 L200 35 L160 35 Z" fill="#5b5b5b" /><path d="M142 17 L158 0 L162 0 L146 18 Z" fill="#7c7c7c" /><path d="M0 15 L62 30 L62 100 L0 105 Z" fill="#5f5f5f" /><rect x="6" y="22" width="2" height="78" fill="#3d3d3d" /><rect x="20" y="22" width="2" height="78" fill="#3d3d3d" /><rect x="33" y="22" width="2" height="78" fill="#3d3d3d" /><rect x="46" y="22" width="2" height="78" fill="#3d3d3d" /><rect x="58" y="22" width="2" height="78" fill="#3d3d3d" /><rect x="0" y="63" width="62" height="2" fill="#6d6d6d" /><rect x="0" y="65" width="62" height="35" fill="#464646" /><rect x="6" y="65" width="2" height="35" fill="#323232" /><rect x="20" y="65" width="2" height="35" fill="#323232" /><rect x="46" y="65" width="2" height="35" fill="#323232" /><rect x="58" y="65" width="2" height="35" fill="#323232" /><rect x="27" y="70" width="11" height="27" fill="#7c7c7c" /><rect x="62" y="31" width="101" height="66" fill="#646464" /><rect x="99" y="40" width="21" height="26" fill="#292929" /><rect x="124" y="43" width="32" height="24" fill="#2e2e2e" /><rect x="142" y="43" width="1.5" height="24" fill="#565656" /><rect x="124" y="69" width="32" height="15" fill="#303030" /><rect x="62" y="66" width="101" height="2" fill="#7e7e7e" /><rect x="63" y="44" width="24" height="20" fill="#6f6f6f" /><rect x="63" y="58" width="22" height="8" fill="#a5a5a5" /><rect x="63" y="71" width="51" height="22" fill="#5d5d5d" /><rect x="82" y="73" width="14" height="13" fill="#393939" /><rect x="163" y="35" width="37" height="65" fill="#5b5b5b" /><rect x="163" y="40" width="8" height="28" fill="#7c7c7c" /><rect x="174" y="38" width="12" height="32" fill="#6d6d6d" /><rect x="186" y="0" width="6" height="100" fill="#515151" /><circle cx="29" cy="47" r="5.5" fill="#909090" opacity="0.45"/><circle cx="29" cy="47" r="2.625" fill="#e8e8e8" opacity="1"/><circle cx="11" cy="53" r="5.5" fill="#909090" opacity="0.45"/><circle cx="11" cy="53" r="2.625" fill="#e8e8e8" opacity="1"/><circle cx="41" cy="54" r="5" fill="#909090" opacity="0.45"/><circle cx="41" cy="54" r="2.25" fill="#e8e8e8" opacity="1"/><circle cx="52" cy="61" r="4.5" fill="#909090" opacity="0.45"/><circle cx="52" cy="61" r="1.875" fill="#e8e8e8" opacity="1"/><circle cx="18" cy="62" r="4" fill="#909090" opacity="0.45"/><circle cx="18" cy="62" r="1.5" fill="#e8e8e8" opacity="1"/><circle cx="122" cy="66" r="4" fill="#909090" opacity="0.45"/><circle cx="122" cy="66" r="1.5" fill="#e8e8e8" opacity="1"/><rect x="80" y="93" width="90" height="4" fill="#5f5f5f" /><rect x="108" y="97" width="11" height="15" fill="#202020" /><rect x="122" y="97" width="11" height="15" fill="#202020" /><rect x="140" y="97" width="11" height="15" fill="#202020" /><rect x="155" y="97" width="11" height="15" fill="#202020" /><rect x="82" y="96" width="20" height="12" fill="#515151" /><rect x="0" y="100" width="200" height="50" fill="#2d2d2d" /><rect x="0" y="100" width="200" height="8" fill="#303030" /><rect x="108" y="97" width="11" height="14" fill="#202020" /><rect x="122" y="97" width="11" height="14" fill="#202020" /><rect x="140" y="97" width="11" height="14" fill="#202020" /><rect x="155" y="97" width="11" height="14" fill="#202020" /><rect x="82" y="96" width="18" height="12" fill="#4d4d4d" /><path d="M178 117 L200 122 L200 125 L178 120 Z" fill="#5f5f5f" /><rect x="190" y="120" width="2" height="30" fill="#515151" /><rect x="200" y="0" width="10" height="100" fill="#5a5a5a"/><rect x="200" y="100" width="10" height="51" fill="#2d2d2d"/></g></g><g clip-path="url(#c2_289)"><g transform="translate(200,0)"><rect x="0" y="0" width="201" height="150" fill="#343434" /><rect x="0" y="0" width="201" height="45" fill="#565656" /><path d="M0 0 L60 0 L60 30 L0 10 Z" fill="#585858" /><rect x="60" y="0" width="70" height="28" fill="#5d5d5d" /><rect x="60" y="28" width="75" height="12" fill="#6d6d6d" /><rect x="120" y="0" width="20" height="25" fill="#292929" /><circle cx="87" cy="15" r="5" fill="#737373" opacity="1"/><path d="M0 10 L55 40 L55 95 L0 100 Z" fill="#585858" /><rect x="10" y="25" width="2" height="70" fill="#393939" /><rect x="22" y="25" width="2" height="70" fill="#393939" /><rect x="34" y="25" width="2" height="70" fill="#393939" /><rect x="46" y="25" width="2" height="70" fill="#393939" /><rect x="0" y="62" width="55" height="3" fill="#646464" /><rect x="55" y="38" width="80" height="58" fill="#646464" /><rect x="96" y="48" width="17" height="20" fill="#272727" /><rect x="117" y="49" width="11" height="19" fill="#2b2b2b" /><rect x="70" y="60" width="16" height="8" fill="#959595" /><rect x="58" y="70" width="28" height="22" fill="#5f5f5f" /><rect x="62" y="73" width="10" height="14" fill="#3e3e3e" /><circle cx="14" cy="52" r="5" fill="#818181" opacity="0.4"/><circle cx="14" cy="52" r="2.0999999999999996" fill="#d8d8d8" opacity="1"/><circle cx="29" cy="59" r="4.5" fill="#818181" opacity="0.4"/><circle cx="29" cy="59" r="1.75" fill="#d8d8d8" opacity="1"/><circle cx="44" cy="54" r="4.5" fill="#818181" opacity="0.4"/><circle cx="44" cy="54" r="1.75" fill="#d8d8d8" opacity="1"/><circle cx="53" cy="58" r="4" fill="#818181" opacity="0.4"/><circle cx="53" cy="58" r="1.4" fill="#d8d8d8" opacity="1"/><circle cx="33" cy="65" r="4" fill="#818181" opacity="0.4"/><circle cx="33" cy="65" r="1.4" fill="#d8d8d8" opacity="1"/><rect x="0" y="95" width="201" height="55" fill="#2d2d2d" /><path d="M128 40 L170 3 L201 0 L201 78 L128 76 Z" fill="#565656" /><rect x="131.0" y="6" width="1.6" height="68" fill="#7a7a7a" /><rect x="137.3" y="6" width="1.6" height="68" fill="#7a7a7a" /><rect x="143.6" y="6" width="1.6" height="68" fill="#7a7a7a" /><rect x="149.9" y="6" width="1.6" height="68" fill="#7a7a7a" /><rect x="156.2" y="6" width="1.6" height="68" fill="#7a7a7a" /><rect x="162.5" y="6" width="1.6" height="68" fill="#7a7a7a" /><rect x="168.8" y="6" width="1.6" height="68" fill="#7a7a7a" /><rect x="175.1" y="6" width="1.6" height="68" fill="#7a7a7a" /><rect x="181.4" y="6" width="1.6" height="68" fill="#7a7a7a" /><rect x="187.7" y="6" width="1.6" height="68" fill="#7a7a7a" /><rect x="194.0" y="6" width="1.6" height="68" fill="#7a7a7a" /><rect x="128" y="22" width="73" height="1.5" fill="#6d6d6d" /><rect x="128" y="45" width="73" height="1.5" fill="#6d6d6d" /><rect x="128" y="72" width="73" height="4" fill="#787878" /><path d="M128 76 L201 80 L201 140 Z" fill="#666666" /><path d="M122 97 L201 134 L201 138 L122 100 Z" fill="#7c7c7c" /><rect x="140" y="104" width="1.5" height="46" fill="#565656" /><path d="M0 103 L30 104 L38 106 L44 112 L50 150 L0 150 Z" fill="#222222" /><path d="M0 106 L30 107 L30 116 L0 118 Z" fill="#2e2e2e" /><path d="M22 88 L32 87 L36 103 L22 104 Z" fill="#242424" /><rect x="84" y="92" width="9" height="12" fill="#222222" /><rect x="100" y="92" width="9" height="12" fill="#222222" /><rect x="116" y="92" width="9" height="12" fill="#222222" /><rect x="201" y="0" width="10" height="80" fill="#5a5a5a"/><rect x="201" y="80" width="10" height="71" fill="#626262"/></g></g><g clip-path="url(#c3_289)"><g transform="translate(401,0)"><rect x="0" y="0" width="160" height="150" fill="#404040" /><rect x="0" y="0" width="30" height="150" fill="#4c4c4c" /><path d="M30 8 L110 50 L115 150 L30 150 Z" fill="#444444" /><path d="M33 15 L90 40 L90 135 L33 128 Z" fill="#393939" /><path d="M45 30 L60 35 L62 110 L48 108 Z" fill="#2b2b2b" /><path d="M70 35 L85 42 L85 100 L72 98 Z" fill="#2e2e2e" /><path d="M93 45 L115 55 L115 142 L93 140 Z" fill="#525252" /><path d="M60 0 L160 0 L160 60 L140 62 L100 20 Z" fill="#585858" /><path d="M110 0 L160 0 L160 50 L140 55 Z" fill="#646464" /><path d="M90 10 L108 20 L108 35 L90 28 Z" fill="#292929" /><path d="M115 55 L160 62 L160 150 L115 150 Z" fill="#343434" /><rect x="145" y="67" width="12" height="38" fill="#5b5b5b" /><path d="M112 130 L160 100 L160 150 L112 150 Z" fill="#252525" /><rect x="160" y="0" width="10" height="151" fill="#3a3a3a"/></g></g></g></svg>
<div class="a" style="left:195px;top:440px;width:560px;height:7px;background:rgba(0,77,77,0.8);box-shadow:inset 0 0 0 1px rgba(0,77,77,0.8)"></div>
<div class="a" style="left:195px;top:448px;width:560px;height:20px;background:rgba(0,0,77,0.8);box-shadow:inset 0 0 0 1px rgba(0,0,77,0.8)"></div>
<div class="a" style="left:195px;top:469px;width:559px;height:152px;background:#fff"></div>
<div class="a" style="left:195px;top:470px;width:558px;height:151px;background:#444"></div>
<svg class="a" style="left:195px;top:470px" width="558" height="151"><defs><filter id="bl470" x="-5%" y="-5%" width="110%" height="110%"><feGaussianBlur stdDeviation="0.9"/></filter><clipPath id="c1_470"><rect x="0" y="0" width="200" height="151"/></clipPath><clipPath id="c2_470"><rect x="200" y="0" width="201" height="151"/></clipPath><clipPath id="c3_470"><rect x="401" y="0" width="157" height="151"/></clipPath></defs><g filter="url(#bl470)"><g clip-path="url(#c1_470)"><g transform="translate(-4,0)"><rect x="0" y="0" width="200" height="150" fill="#343434" /><rect x="0" y="0" width="200" height="35" fill="#5a5a5a" /><path d="M0 0 L40 0 L40 30 L0 18 Z" fill="#666666" /><rect x="40" y="0" width="115" height="13" fill="#585858" /><rect x="44" y="1" width="1.5" height="11" fill="#6c6c6c" /><rect x="56" y="1" width="1.5" height="11" fill="#6c6c6c" /><rect x="68" y="1" width="1.5" height="11" fill="#6c6c6c" /><rect x="80" y="1" width="1.5" height="11" fill="#6c6c6c" /><rect x="92" y="1" width="1.5" height="11" fill="#6c6c6c" /><rect x="104" y="1" width="1.5" height="11" fill="#6c6c6c" /><rect x="116" y="1" width="1.5" height="11" fill="#6c6c6c" /><rect x="128" y="1" width="1.5" height="11" fill="#6c6c6c" /><rect x="140" y="1" width="1.5" height="11" fill="#6c6c6c" /><rect x="140" y="0" width="15" height="18" fill="#363636" /><rect x="40" y="12" width="115" height="2" fill="#444444" /><rect x="40" y="14" width="113" height="17" fill="#6a6a6a" /><rect x="40" y="28" width="125" height="4" fill="#767676" /><path d="M152 0 L200 0 L200 35 L160 35 Z" fill="#5b5b5b" /><path d="M142 17 L158 0 L162 0 L146 18 Z" fill="#7c7c7c" /><path d="M0 15 L62 30 L62 100 L0 105 Z" fill="#5f5f5f" /><rect x="6" y="22" width="2" height="78" fill="#3d3d3d" /><rect x="20" y="22" width="2" height="78" fill="#3d3d3d" /><rect x="33" y="22" width="2" height="78" fill="#3d3d3d" /><rect x="46" y="22" width="2" height="78" fill="#3d3d3d" /><rect x="58" y="22" width="2" height="78" fill="#3d3d3d" /><rect x="0" y="63" width="62" height="2" fill="#6d6d6d" /><rect x="0" y="65" width="62" height="35" fill="#464646" /><rect x="6" y="65" width="2" height="35" fill="#323232" /><rect x="20" y="65" width="2" height="35" fill="#323232" /><rect x="46" y="65" width="2" height="35" fill="#323232" /><rect x="58" y="65" width="2" height="35" fill="#323232" /><rect x="27" y="70" width="11" height="27" fill="#7c7c7c" /><rect x="62" y="31" width="101" height="66" fill="#646464" /><rect x="99" y="40" width="21" height="26" fill="#292929" /><rect x="124" y="43" width="32" height="24" fill="#2e2e2e" /><rect x="142" y="43" width="1.5" height="24" fill="#565656" /><rect x="124" y="69" width="32" height="15" fill="#303030" /><rect x="62" y="66" width="101" height="2" fill="#7e7e7e" /><rect x="63" y="44" width="24" height="20" fill="#6f6f6f" /><rect x="63" y="58" width="22" height="8" fill="#a5a5a5" /><rect x="63" y="71" width="51" height="22" fill="#5d5d5d" /><rect x="82" y="73" width="14" height="13" fill="#393939" /><rect x="163" y="35" width="37" height="65" fill="#5b5b5b" /><rect x="163" y="40" width="8" height="28" fill="#7c7c7c" /><rect x="174" y="38" width="12" height="32" fill="#6d6d6d" /><rect x="186" y="0" width="6" height="100" fill="#515151" /><circle cx="29" cy="47" r="5.5" fill="#909090" opacity="0.45"/><circle cx="29" cy="47" r="2.625" fill="#e8e8e8" opacity="1"/><circle cx="11" cy="53" r="5.5" fill="#909090" opacity="0.45"/><circle cx="11" cy="53" r="2.625" fill="#e8e8e8" opacity="1"/><circle cx="41" cy="54" r="5" fill="#909090" opacity="0.45"/><circle cx="41" cy="54" r="2.25" fill="#e8e8e8" opacity="1"/><circle cx="52" cy="61" r="4.5" fill="#909090" opacity="0.45"/><circle cx="52" cy="61" r="1.875" fill="#e8e8e8" opacity="1"/><circle cx="18" cy="62" r="4" fill="#909090" opacity="0.45"/><circle cx="18" cy="62" r="1.5" fill="#e8e8e8" opacity="1"/><circle cx="122" cy="66" r="4" fill="#909090" opacity="0.45"/><circle cx="122" cy="66" r="1.5" fill="#e8e8e8" opacity="1"/><rect x="80" y="93" width="90" height="4" fill="#5f5f5f" /><rect x="108" y="97" width="11" height="15" fill="#202020" /><rect x="122" y="97" width="11" height="15" fill="#202020" /><rect x="140" y="97" width="11" height="15" fill="#202020" /><rect x="155" y="97" width="11" height="15" fill="#202020" /><rect x="82" y="96" width="20" height="12" fill="#515151" /><rect x="0" y="100" width="200" height="50" fill="#2d2d2d" /><rect x="0" y="100" width="200" height="8" fill="#303030" /><rect x="108" y="97" width="11" height="14" fill="#202020" /><rect x="122" y="97" width="11" height="14" fill="#202020" /><rect x="140" y="97" width="11" height="14" fill="#202020" /><rect x="155" y="97" width="11" height="14" fill="#202020" /><rect x="82" y="96" width="18" height="12" fill="#4d4d4d" /><path d="M178 117 L200 122 L200 125 L178 120 Z" fill="#5f5f5f" /><rect x="190" y="120" width="2" height="30" fill="#515151" /><rect x="200" y="0" width="10" height="100" fill="#5a5a5a"/><rect x="200" y="100" width="10" height="51" fill="#2d2d2d"/></g></g><g clip-path="url(#c2_470)"><g transform="translate(196,0)"><rect x="0" y="0" width="201" height="150" fill="#343434" /><rect x="0" y="0" width="201" height="45" fill="#565656" /><path d="M0 0 L60 0 L60 30 L0 10 Z" fill="#585858" /><rect x="60" y="0" width="70" height="28" fill="#5d5d5d" /><rect x="60" y="28" width="75" height="12" fill="#6d6d6d" /><rect x="120" y="0" width="20" height="25" fill="#292929" /><circle cx="87" cy="15" r="5" fill="#737373" opacity="1"/><path d="M0 10 L55 40 L55 95 L0 100 Z" fill="#585858" /><rect x="10" y="25" width="2" height="70" fill="#393939" /><rect x="22" y="25" width="2" height="70" fill="#393939" /><rect x="34" y="25" width="2" height="70" fill="#393939" /><rect x="46" y="25" width="2" height="70" fill="#393939" /><rect x="0" y="62" width="55" height="3" fill="#646464" /><rect x="55" y="38" width="80" height="58" fill="#646464" /><rect x="96" y="48" width="17" height="20" fill="#272727" /><rect x="117" y="49" width="11" height="19" fill="#2b2b2b" /><rect x="70" y="60" width="16" height="8" fill="#959595" /><rect x="58" y="70" width="28" height="22" fill="#5f5f5f" /><rect x="62" y="73" width="10" height="14" fill="#3e3e3e" /><circle cx="14" cy="52" r="5" fill="#818181" opacity="0.4"/><circle cx="14" cy="52" r="2.0999999999999996" fill="#d8d8d8" opacity="1"/><circle cx="29" cy="59" r="4.5" fill="#818181" opacity="0.4"/><circle cx="29" cy="59" r="1.75" fill="#d8d8d8" opacity="1"/><circle cx="44" cy="54" r="4.5" fill="#818181" opacity="0.4"/><circle cx="44" cy="54" r="1.75" fill="#d8d8d8" opacity="1"/><circle cx="53" cy="58" r="4" fill="#818181" opacity="0.4"/><circle cx="53" cy="58" r="1.4" fill="#d8d8d8" opacity="1"/><circle cx="33" cy="65" r="4" fill="#818181" opacity="0.4"/><circle cx="33" cy="65" r="1.4" fill="#d8d8d8" opacity="1"/><rect x="0" y="95" width="201" height="55" fill="#2d2d2d" /><path d="M128 40 L170 3 L201 0 L201 78 L128 76 Z" fill="#565656" /><rect x="131.0" y="6" width="1.6" height="68" fill="#7a7a7a" /><rect x="137.3" y="6" width="1.6" height="68" fill="#7a7a7a" /><rect x="143.6" y="6" width="1.6" height="68" fill="#7a7a7a" /><rect x="149.9" y="6" width="1.6" height="68" fill="#7a7a7a" /><rect x="156.2" y="6" width="1.6" height="68" fill="#7a7a7a" /><rect x="162.5" y="6" width="1.6" height="68" fill="#7a7a7a" /><rect x="168.8" y="6" width="1.6" height="68" fill="#7a7a7a" /><rect x="175.1" y="6" width="1.6" height="68" fill="#7a7a7a" /><rect x="181.4" y="6" width="1.6" height="68" fill="#7a7a7a" /><rect x="187.7" y="6" width="1.6" height="68" fill="#7a7a7a" /><rect x="194.0" y="6" width="1.6" height="68" fill="#7a7a7a" /><rect x="128" y="22" width="73" height="1.5" fill="#6d6d6d" /><rect x="128" y="45" width="73" height="1.5" fill="#6d6d6d" /><rect x="128" y="72" width="73" height="4" fill="#787878" /><path d="M128 76 L201 80 L201 140 Z" fill="#666666" /><path d="M122 97 L201 134 L201 138 L122 100 Z" fill="#7c7c7c" /><rect x="140" y="104" width="1.5" height="46" fill="#565656" /><path d="M0 103 L30 104 L38 106 L44 112 L50 150 L0 150 Z" fill="#222222" /><path d="M0 106 L30 107 L30 116 L0 118 Z" fill="#2e2e2e" /><path d="M22 88 L32 87 L36 103 L22 104 Z" fill="#242424" /><rect x="84" y="92" width="9" height="12" fill="#222222" /><rect x="100" y="92" width="9" height="12" fill="#222222" /><rect x="116" y="92" width="9" height="12" fill="#222222" /><rect x="201" y="0" width="10" height="80" fill="#5a5a5a"/><rect x="201" y="80" width="10" height="71" fill="#626262"/></g></g><g clip-path="url(#c3_470)"><g transform="translate(397,0)"><rect x="0" y="0" width="160" height="150" fill="#404040" /><rect x="0" y="0" width="30" height="150" fill="#4c4c4c" /><path d="M30 8 L110 50 L115 150 L30 150 Z" fill="#444444" /><path d="M33 15 L90 40 L90 135 L33 128 Z" fill="#393939" /><path d="M45 30 L60 35 L62 110 L48 108 Z" fill="#2b2b2b" /><path d="M70 35 L85 42 L85 100 L72 98 Z" fill="#2e2e2e" /><path d="M93 45 L115 55 L115 142 L93 140 Z" fill="#525252" /><path d="M60 0 L160 0 L160 60 L140 62 L100 20 Z" fill="#585858" /><path d="M110 0 L160 0 L160 50 L140 55 Z" fill="#646464" /><path d="M90 10 L108 20 L108 35 L90 28 Z" fill="#292929" /><path d="M115 55 L160 62 L160 150 L115 150 Z" fill="#343434" /><rect x="145" y="67" width="12" height="38" fill="#5b5b5b" /><path d="M112 130 L160 100 L160 150 L112 150 Z" fill="#252525" /><rect x="160" y="0" width="10" height="151" fill="#3a3a3a"/></g></g></g></svg>
<div class="a" style="left:195px;top:621px;width:560px;height:7px;background:rgba(0,77,77,0.8);box-shadow:inset 0 0 0 1px rgba(0,77,77,0.8)"></div>
<svg class="a" style="left:0;top:0" width="1282" height="669"><line x1="194.5" y1="77" x2="194.5" y2="245" stroke="rgba(0,0,0,0.7)" stroke-width="1" stroke-dasharray="4 2" stroke-dashoffset="3"/><line x1="281.5" y1="77" x2="281.5" y2="245" stroke="rgba(0,0,0,0.7)" stroke-width="1" stroke-dasharray="4 2" stroke-dashoffset="3"/><line x1="368.5" y1="77" x2="368.5" y2="245" stroke="rgba(0,0,0,0.7)" stroke-width="1" stroke-dasharray="4 2" stroke-dashoffset="3"/><line x1="455.5" y1="77" x2="455.5" y2="245" stroke="rgba(0,0,0,0.7)" stroke-width="1" stroke-dasharray="4 2" stroke-dashoffset="3"/><line x1="542.5" y1="77" x2="542.5" y2="245" stroke="rgba(0,0,0,0.7)" stroke-width="1" stroke-dasharray="4 2" stroke-dashoffset="3"/><line x1="629.5" y1="77" x2="629.5" y2="245" stroke="rgba(0,0,0,0.7)" stroke-width="1" stroke-dasharray="4 2" stroke-dashoffset="3"/><line x1="716.5" y1="77" x2="716.5" y2="245" stroke="rgba(0,0,0,0.7)" stroke-width="1" stroke-dasharray="4 2" stroke-dashoffset="3"/><line x1="194.5" y1="266" x2="194.5" y2="288" stroke="rgba(0,0,0,0.7)" stroke-width="1" stroke-dasharray="4 2" stroke-dashoffset="0"/><line x1="281.5" y1="266" x2="281.5" y2="288" stroke="rgba(0,0,0,0.7)" stroke-width="1" stroke-dasharray="4 2" stroke-dashoffset="0"/><line x1="368.5" y1="266" x2="368.5" y2="288" stroke="rgba(0,0,0,0.7)" stroke-width="1" stroke-dasharray="4 2" stroke-dashoffset="0"/><line x1="455.5" y1="266" x2="455.5" y2="288" stroke="rgba(0,0,0,0.7)" stroke-width="1" stroke-dasharray="4 2" stroke-dashoffset="0"/><line x1="542.5" y1="266" x2="542.5" y2="288" stroke="rgba(0,0,0,0.7)" stroke-width="1" stroke-dasharray="4 2" stroke-dashoffset="0"/><line x1="629.5" y1="266" x2="629.5" y2="288" stroke="rgba(0,0,0,0.7)" stroke-width="1" stroke-dasharray="4 2" stroke-dashoffset="0"/><line x1="716.5" y1="266" x2="716.5" y2="288" stroke="rgba(0,0,0,0.7)" stroke-width="1" stroke-dasharray="4 2" stroke-dashoffset="0"/><line x1="194.5" y1="440" x2="194.5" y2="469" stroke="rgba(0,0,0,0.7)" stroke-width="1" stroke-dasharray="4 2" stroke-dashoffset="0"/><line x1="281.5" y1="440" x2="281.5" y2="469" stroke="rgba(0,0,0,0.7)" stroke-width="1" stroke-dasharray="4 2" stroke-dashoffset="0"/><line x1="368.5" y1="440" x2="368.5" y2="469" stroke="rgba(0,0,0,0.7)" stroke-width="1" stroke-dasharray="4 2" stroke-dashoffset="0"/><line x1="455.5" y1="440" x2="455.5" y2="469" stroke="rgba(0,0,0,0.7)" stroke-width="1" stroke-dasharray="4 2" stroke-dashoffset="0"/><line x1="542.5" y1="440" x2="542.5" y2="469" stroke="rgba(0,0,0,0.7)" stroke-width="1" stroke-dasharray="4 2" stroke-dashoffset="0"/><line x1="629.5" y1="440" x2="629.5" y2="469" stroke="rgba(0,0,0,0.7)" stroke-width="1" stroke-dasharray="4 2" stroke-dashoffset="0"/><line x1="716.5" y1="440" x2="716.5" y2="469" stroke="rgba(0,0,0,0.7)" stroke-width="1" stroke-dasharray="4 2" stroke-dashoffset="0"/><line x1="194.5" y1="621" x2="194.5" y2="628" stroke="rgba(0,0,0,0.7)" stroke-width="1" stroke-dasharray="4 2" stroke-dashoffset="1"/><line x1="281.5" y1="621" x2="281.5" y2="628" stroke="rgba(0,0,0,0.7)" stroke-width="1" stroke-dasharray="4 2" stroke-dashoffset="1"/><line x1="368.5" y1="621" x2="368.5" y2="628" stroke="rgba(0,0,0,0.7)" stroke-width="1" stroke-dasharray="4 2" stroke-dashoffset="1"/><line x1="455.5" y1="621" x2="455.5" y2="628" stroke="rgba(0,0,0,0.7)" stroke-width="1" stroke-dasharray="4 2" stroke-dashoffset="1"/><line x1="542.5" y1="621" x2="542.5" y2="628" stroke="rgba(0,0,0,0.7)" stroke-width="1" stroke-dasharray="4 2" stroke-dashoffset="1"/><line x1="629.5" y1="621" x2="629.5" y2="628" stroke="rgba(0,0,0,0.7)" stroke-width="1" stroke-dasharray="4 2" stroke-dashoffset="1"/><line x1="716.5" y1="621" x2="716.5" y2="628" stroke="rgba(0,0,0,0.7)" stroke-width="1" stroke-dasharray="4 2" stroke-dashoffset="1"/></svg>
<div class="a" style="left:194px;top:76px;width:562px;height:1px;background:#000"></div>
<div class="a" style="left:194px;top:76px;width:1px;height:552px;background:#000"></div>
<div class="a" style="left:755px;top:76px;width:1px;height:552px;background:#000"></div>
<div class="a" style="left:194px;top:627px;width:562px;height:1px;background:#000"></div>
<div class="a" style="left:454px;top:72px;width:1px;height:558px;background:#e8282a"></div>
<svg class="a" style="left:447px;top:69px" width="15" height="8"><path d="M1 1 H14 L7.5 7.5 Z" fill="#ff3333"/></svg>
<svg class="a" style="left:447px;top:627px" width="15" height="8"><path d="M1 7 H14 L7.5 0.5 Z" fill="#ff3333"/></svg>
<div class="sf" style="left:2px;width:173px;background:#fff"><span></span></div>
<div class="sf" style="left:175px;width:175px;background:#eeeeee"><span>1296143484.605232239s</span></div>
<div class="sf" style="left:350px;width:174px;background:#eeeeee"><span>Jan 27 2011 15:51:24.605</span></div>
<div class="sf" style="left:524px;width:90px;background:#eeeeee"><span>89.640s</span></div>
<div class="sf" style="left:614px;width:80px;background:#eeeeee"><span></span></div>
<div class="sf" style="left:694px;width:79px;background:#eeeeee"><span>3.34 GB</span></div>
<div class="a" style="left:702px;top:6px;width:16px;height:16px;border:1px solid #b8b8b8;border-radius:2px;background:#dfdfdf"></div><div class="t" style="left:705px;top:9px;font-size:12.5px">D</div><svg class="a" style="left:718px;top:6px" width="16" height="16" viewBox="0 0 16 16"><defs><linearGradient id="hb" x1="0" y1="0" x2="1" y2="1"><stop offset="0" stop-color="#164591"/><stop offset="1" stop-color="#7ca3d3"/></linearGradient></defs><circle cx="8" cy="8" r="7.4" fill="#2858a0"/><circle cx="8" cy="8" r="6.3" fill="#fff"/><circle cx="8" cy="8" r="5.6" fill="url(#hb)"/><path d="M5.6 6.2 C5.6 3.6 10.6 3.4 10.6 6.2 C10.6 7.9 8.6 7.9 8.6 9.6" fill="none" stroke="#fff" stroke-width="2"/><rect x="7.5" y="10.6" width="2.2" height="2.2" fill="#fff"/></svg><div class="t" style="left:747px;top:8px;font-size:13px;font-weight:bold">-</div><div class="t" style="left:760px;top:9px;font-size:13px">O</div><div class="a" style="left:1178px;top:6px;width:16px;height:16px;border:1px solid #b8b8b8;border-radius:2px;background:#dfdfdf"></div><div class="t" style="left:1181px;top:9px;font-size:12.5px">D</div><svg class="a" style="left:1195px;top:6px" width="14" height="16" viewBox="0 0 14 16"><path d="M0.6 8 C0.8 3 7 1.5 10 5 L10 2.2 L13.4 2 L13.4 9 L6.6 9 L8.6 7 C6.5 4.8 3 5.5 2.6 7.5 Z" fill="#dce9f7" stroke="#2a62b0" stroke-width="1"/><path d="M13.4 9.6 C13.2 14.5 7 16 4 12.6 L4 15.4 L0.6 15.6 L0.6 9.8 L7.4 9.8 L5.4 11 C7.5 13.2 11 12.4 11.4 10.4 Z" fill="#dce9f7" stroke="#2a62b0" stroke-width="1"/></svg><svg class="a" style="left:1210px;top:6px" width="16" height="16" viewBox="0 0 16 16"><defs><linearGradient id="hb" x1="0" y1="0" x2="1" y2="1"><stop offset="0" stop-color="#164591"/><stop offset="1" stop-color="#7ca3d3"/></linearGradient></defs><circle cx="8" cy="8" r="7.4" fill="#2858a0"/><circle cx="8" cy="8" r="6.3" fill="#fff"/><circle cx="8" cy="8" r="5.6" fill="url(#hb)"/><path d="M5.6 6.2 C5.6 3.6 10.6 3.4 10.6 6.2 C10.6 7.9 8.6 7.9 8.6 9.6" fill="none" stroke="#fff" stroke-width="2"/><rect x="7.5" y="10.6" width="2.2" height="2.2" fill="#fff"/></svg><div class="t" style="left:1239px;top:8px;font-size:13px;font-weight:bold">-</div><div class="t" style="left:1253px;top:9px;font-size:13px">O</div><div class="t" style="left:1269px;top:9px;font-size:13px">X</div>
<svg class="a" style="left:780px;top:7px" width="15" height="15" viewBox="0 0 15 15"><defs><linearGradient id="dg" x1="0" y1="0" x2="1" y2="1"><stop offset="0" stop-color="#f6b94a"/><stop offset="0.5" stop-color="#f8cf86"/><stop offset="1" stop-color="#ee9d2a"/></linearGradient></defs><path d="M7.5 0.8 L14.2 7.5 L7.5 14.2 L0.8 7.5 Z" fill="url(#dg)" stroke="#dc6a12" stroke-width="1.2"/></svg>
<div class="t" style="left:796px;top:8px;font-size:13.3px">/wide_stereo/left/camera_info__Raw</div>
<svg class="a" style="left:797px;top:40px;overflow:visible" width="22" height="20" viewBox="0 0 22 20"><ellipse cx="11" cy="17.5" rx="9" ry="3" fill="url(#shd)"/><rect x="1.5" y="1" width="4" height="17" fill="url(#gg2)" stroke="#2f7f05" stroke-width="1.1"/><rect x="2.6" y="2.1" width="1.8" height="14.8" fill="none" stroke="#c9f2a2" stroke-width="0.9" opacity="0.9"/><path d="M5.5 9.5 L12.6 1.2 L12.6 5.2 L20.4 5.2 L20.4 13.8 L12.6 13.8 L12.6 17.8 Z" fill="url(#gg2)" stroke="#2f7f05" stroke-width="1.1"/><path d="M7.2 9.5 L11.5 4.3 L11.5 6.3 L19.3 6.3 L19.3 12.7 L11.5 12.7 L11.5 14.7 Z" fill="none" stroke="#c9f2a2" stroke-width="0.9" opacity="0.9"/></svg>
<svg class="a" style="left:833px;top:40px;overflow:visible" width="18" height="20" viewBox="0 0 18 20"><ellipse cx="11" cy="17.5" rx="9" ry="3" fill="url(#shd)"/><path d="M0.6 9.5 L9.2 1 L9.2 5.2 L16.4 5.2 L16.4 13.8 L9.2 13.8 L9.2 18 Z" fill="url(#gg2)" stroke="#2f7f05" stroke-width="1.1"/><path d="M2.3 9.5 L8.1 3.7 L8.1 6.3 L15.3 6.3 L15.3 12.7 L8.1 12.7 L8.1 15.3 Z" fill="none" stroke="#c9f2a2" stroke-width="0.9" opacity="0.9"/></svg>
<svg class="a" style="left:867px;top:40px;overflow:visible" width="18" height="20" viewBox="0 0 18 20"><ellipse cx="11" cy="17.5" rx="9" ry="3" fill="url(#shd)"/><path d="M16.40 9.5 L7.80 1 L7.80 5.2 L0.60 5.2 L0.60 13.8 L7.80 13.8 L7.80 18 Z" fill="url(#gg2)" stroke="#2f7f05" stroke-width="1.1"/><path d="M14.70 9.5 L8.90 3.7 L8.90 6.3 L1.70 6.3 L1.70 12.7 L8.90 12.7 L8.90 15.3 Z" fill="none" stroke="#c9f2a2" stroke-width="0.9" opacity="0.9"/></svg>
<svg class="a" style="left:898px;top:40px;overflow:visible" width="22" height="20" viewBox="0 0 22 20"><ellipse cx="11" cy="17.5" rx="9" ry="3" fill="url(#shd)"/><rect x="16.5" y="1" width="4" height="17" fill="url(#gg2)" stroke="#2f7f05" stroke-width="1.1"/><rect x="17.599999999999998" y="2.1" width="1.8" height="14.8" fill="none" stroke="#c9f2a2" stroke-width="0.9" opacity="0.9"/><path d="M16.50 9.5 L9.40 1.2 L9.40 5.2 L1.60 5.2 L1.60 13.8 L9.40 13.8 L9.40 17.8 Z" fill="url(#gg2)" stroke="#2f7f05" stroke-width="1.1"/><path d="M14.80 9.5 L10.50 4.3 L10.50 6.3 L2.70 6.3 L2.70 12.7 L10.50 12.7 L10.50 14.7 Z" fill="none" stroke="#c9f2a2" stroke-width="0.9" opacity="0.9"/></svg>
<div class="a" style="left:789px;top:75px;width:484px;height:178px;background:#fff;border:1px solid #adadad"></div>
<div class="a" style="left:790px;top:76px;width:468px;height:19px;background:linear-gradient(#fafafa,#e6e6e6);border-bottom:1px solid #b8b8b8"></div>
<div class="t" style="left:792px;top:79px;font-size:13.2px">sensor_msgs/CameraInfo</div>
<div class="a" style="left:1258px;top:76px;width:14px;height:176px;background:#fff;border-left:1px solid #b8b8b8"></div>
<div class="a" style="left:1259px;top:89px;width:13px;height:75px;background:linear-gradient(90deg,#ffffff,#ececec);border-top:1px solid #b8b8b8"></div>
<div class="a" style="left:1259px;top:164px;width:13px;height:74px;background:#dedede;border-top:1px solid #c4c4c4;border-bottom:1px solid #c4c4c4"></div>
<svg class="a" style="left:1259px;top:76px" width="13" height="176"><path d="M2.5 9 L10.5 9 L6.5 4.5 Z" fill="#444"/><path d="M2.5 166.5 L10.5 166.5 L6.5 171 Z" fill="#444"/></svg>
<div class="a" style="left:810px;top:95px;width:448px;height:15px;background:#e4f0fa;border:1px solid #a8c8e4;border-radius:1px"></div>
<div class="a" style="left:790px;top:95px;width:468px;height:157px;overflow:hidden"><div class="a" style="left:-790px;top:-95px;width:1282px;height:669px"><div class="t" style="left:813px;top:96px;font-size:13.8px">header</div><svg class="a" style="left:797px;top:98.5px" width="6" height="8"><path d="M1 0.5 L5 4 L1 7.5 Z" fill="#555"/></svg><div class="t" style="left:813px;top:112px;font-size:13.8px">height:  480</div><div class="t" style="left:813px;top:126px;font-size:13.8px">width:  640</div><div class="t" style="left:813px;top:142px;font-size:13.8px">distortion_model: plumb_bob</div><div class="t" style="left:813px;top:156px;font-size:13.8px">D</div><svg class="a" style="left:797px;top:158.5px" width="6" height="8"><path d="M1 0.5 L5 4 L1 7.5 Z" fill="#555"/></svg><div class="t" style="left:813px;top:172px;font-size:13.8px">K</div><svg class="a" style="left:797px;top:175px" width="8" height="6"><path d="M0.5 1 L7.5 1 L4 5 Z" fill="#555"/></svg><div class="t" style="left:833px;top:186px;font-size:13.8px">[0]:  421.607280</div><div class="t" style="left:833px;top:202px;font-size:13.8px">[1]:  0.000000</div><div class="t" style="left:833px;top:216px;font-size:13.8px">[2]:  316.566400</div><div class="t" style="left:833px;top:232px;font-size:13.8px">[3]:  0.000000</div><div class="t" style="left:833px;top:246px;font-size:13.8px">[4]:  421.114980</div></div></div>
<div class="a" style="left:1024px;top:264px;width:17px;height:1px;background:repeating-linear-gradient(90deg,#b0b0b0 0 1px,transparent 1px 3px)"></div>
<div class="a" style="left:777px;top:327px;width:1px;height:16px;background:repeating-linear-gradient(#b0b0b0 0 1px,transparent 1px 2px)"></div>
<div class="a" style="left:1178px;top:273px;width:16px;height:16px;border:1px solid #b8b8b8;border-radius:2px;background:#dfdfdf"></div><div class="t" style="left:1181px;top:276px;font-size:12.5px">D</div><svg class="a" style="left:1195px;top:273px" width="14" height="16" viewBox="0 0 14 16"><path d="M0.6 8 C0.8 3 7 1.5 10 5 L10 2.2 L13.4 2 L13.4 9 L6.6 9 L8.6 7 C6.5 4.8 3 5.5 2.6 7.5 Z" fill="#dce9f7" stroke="#2a62b0" stroke-width="1"/><path d="M13.4 9.6 C13.2 14.5 7 16 4 12.6 L4 15.4 L0.6 15.6 L0.6 9.8 L7.4 9.8 L5.4 11 C7.5 13.2 11 12.4 11.4 10.4 Z" fill="#dce9f7" stroke="#2a62b0" stroke-width="1"/></svg><svg class="a" style="left:1210px;top:273px" width="16" height="16" viewBox="0 0 16 16"><defs><linearGradient id="hb" x1="0" y1="0" x2="1" y2="1"><stop offset="0" stop-color="#164591"/><stop offset="1" stop-color="#7ca3d3"/></linearGradient></defs><circle cx="8" cy="8" r="7.4" fill="#2858a0"/><circle cx="8" cy="8" r="6.3" fill="#fff"/><circle cx="8" cy="8" r="5.6" fill="url(#hb)"/><path d="M5.6 6.2 C5.6 3.6 10.6 3.4 10.6 6.2 C10.6 7.9 8.6 7.9 8.6 9.6" fill="none" stroke="#fff" stroke-width="2"/><rect x="7.5" y="10.6" width="2.2" height="2.2" fill="#fff"/></svg><div class="t" style="left:1239px;top:275px;font-size:13px;font-weight:bold">-</div><div class="t" style="left:1253px;top:276px;font-size:13px">O</div><div class="t" style="left:1269px;top:276px;font-size:13px">X</div>
<svg class="a" style="left:780px;top:274px" width="15" height="15" viewBox="0 0 15 15"><defs><linearGradient id="dg" x1="0" y1="0" x2="1" y2="1"><stop offset="0" stop-color="#f6b94a"/><stop offset="0.5" stop-color="#f8cf86"/><stop offset="1" stop-color="#ee9d2a"/></linearGradient></defs><path d="M7.5 0.8 L14.2 7.5 L7.5 14.2 L0.8 7.5 Z" fill="url(#dg)" stroke="#dc6a12" stroke-width="1.2"/></svg>
<div class="t" style="left:796px;top:275px;font-size:13.3px">/torso_lift_imu/data__Plot</div>
<svg class="a" style="left:0;top:0" width="1282" height="669"><rect x="816" y="369" width="426" height="261" fill="#fff"/><line x1="875.5" y1="384" x2="875.5" y2="591" stroke="#808080" stroke-width="1"/><line x1="875.5" y1="591" x2="875.5" y2="596" stroke="#000" stroke-width="1"/><line x1="963.5" y1="384" x2="963.5" y2="591" stroke="#808080" stroke-width="1"/><line x1="963.5" y1="591" x2="963.5" y2="596" stroke="#000" stroke-width="1"/><line x1="1050.5" y1="384" x2="1050.5" y2="591" stroke="#808080" stroke-width="1"/><line x1="1050.5" y1="591" x2="1050.5" y2="596" stroke="#000" stroke-width="1"/><line x1="1137.5" y1="384" x2="1137.5" y2="591" stroke="#808080" stroke-width="1"/><line x1="1137.5" y1="591" x2="1137.5" y2="596" stroke="#000" stroke-width="1"/><line x1="1225.5" y1="384" x2="1225.5" y2="591" stroke="#808080" stroke-width="1"/><line x1="1225.5" y1="591" x2="1225.5" y2="596" stroke="#000" stroke-width="1"/><line x1="870" y1="430.5" x2="1227" y2="430.5" stroke="#808080" stroke-width="1"/><line x1="865" y1="430.5" x2="870" y2="430.5" stroke="#000" stroke-width="1"/><line x1="870" y1="482.5" x2="1227" y2="482.5" stroke="#808080" stroke-width="1"/><line x1="865" y1="482.5" x2="870" y2="482.5" stroke="#000" stroke-width="1"/><line x1="870" y1="533.5" x2="1227" y2="533.5" stroke="#808080" stroke-width="1"/><line x1="865" y1="533.5" x2="870" y2="533.5" stroke="#000" stroke-width="1"/><line x1="870" y1="584.5" x2="1227" y2="584.5" stroke="#808080" stroke-width="1"/><line x1="865" y1="584.5" x2="870" y2="584.5" stroke="#000" stroke-width="1"/><path d="M875.3 481.6 L877.0 481.6 L878.8 481.6 L880.5 481.6 L882.3 481.6 L884.0 481.6 L885.8 481.6 L887.5 481.6 L889.3 481.6 L891.0 481.6 L892.8 481.6 L894.5 481.6 L896.3 481.6 L898.0 482.3 L899.8 480.1 L901.5 482.3 L903.2 482.5 L905.0 484.3 L906.7 482.2 L908.5 478.4 L910.2 480.4 L912.0 478.6 L913.7 480.9 L915.5 480.5 L917.2 481.1 L919.0 486.4 L920.7 479.1 L922.5 470.3 L924.2 480.2 L925.9 486.5 L927.7 486.6 L929.4 470.3 L931.2 482.9 L932.9 480.7 L934.7 488.8 L936.4 480.1 L938.2 483.5 L939.9 480.7 L941.7 480.5 L943.4 483.5 L945.2 476.7 L946.9 480.0 L948.7 478.2 L950.4 483.4 L952.1 483.7 L953.9 482.6 L955.6 481.9 L957.4 479.8 L959.1 480.9 L960.9 482.9 L962.6 484.4 L964.4 483.1 L966.1 478.1 L967.9 483.9 L969.6 480.9 L971.4 480.4 L973.1 485.9 L974.9 481.5 L976.6 477.8 L978.3 487.4 L980.1 482.5 L981.8 481.9 L983.6 484.0 L985.3 480.2 L987.1 481.8 L988.8 485.8 L990.6 479.2 L992.3 479.7 L994.1 478.9 L995.8 477.4 L997.6 480.6 L999.3 481.3 L1001.0 485.3 L1002.8 479.8 L1004.5 483.4 L1006.3 482.9 L1008.0 485.2 L1009.8 492.9 L1011.5 483.1 L1013.3 477.9 L1015.0 487.5 L1016.8 485.8 L1018.5 480.9 L1020.3 477.4 L1022.0 479.9 L1023.8 487.1 L1025.5 488.9 L1027.2 480.6 L1029.0 483.7 L1030.7 484.8 L1032.5 478.8 L1034.2 478.4 L1036.0 481.1 L1037.7 480.9 L1039.5 480.3 L1041.2 489.8 L1043.0 479.8 L1044.7 480.1 L1046.5 480.0 L1048.2 486.1 L1050.0 477.9 L1051.7 478.8 L1053.4 480.1 L1055.2 487.3 L1056.9 483.4 L1058.7 479.2 L1060.4 486.8 L1062.2 482.1 L1063.9 478.7 L1065.7 485.4 L1067.4 477.0 L1069.2 495.0 L1070.9 482.0 L1072.7 480.7 L1074.4 479.7 L1076.1 481.3 L1077.9 478.3 L1079.6 483.5 L1081.4 482.8 L1083.1 478.6 L1084.9 481.5 L1086.6 484.1 L1088.4 478.9 L1090.1 477.4 L1091.9 482.9 L1093.6 485.6 L1095.4 482.0 L1097.1 482.0 L1098.9 482.5 L1100.6 477.6 L1102.3 484.6 L1104.1 478.0 L1105.8 485.3 L1107.6 491.9 L1109.3 479.8 L1111.1 478.3 L1112.8 479.1 L1114.6 480.6 L1116.3 481.2 L1118.1 481.2 L1119.8 479.9 L1121.6 482.1 L1123.3 480.8 L1125.0 479.9 L1126.8 481.6 L1128.5 479.4 L1130.3 480.0 L1132.0 475.8 L1133.8 480.7 L1135.5 482.8 L1137.3 482.7 L1139.0 481.6 L1140.8 478.9 L1142.5 482.6 L1144.3 480.5 L1146.0 476.3 L1147.8 489.0 L1149.5 484.8 L1151.2 480.9 L1153.0 480.5 L1154.7 480.9 L1156.5 482.8 L1158.2 479.7 L1160.0 480.8 L1161.7 483.1 L1163.5 474.6 L1165.2 480.6 L1167.0 483.2 L1168.7 481.9 L1170.5 482.2 L1172.2 481.8 L1174.0 489.5 L1175.7 483.0 L1177.4 472.3 L1179.2 485.0 L1180.9 481.8 L1182.7 478.9 L1184.4 479.1 L1186.2 477.3 L1187.9 486.5 L1189.7 482.6 L1191.4 482.6 L1193.2 479.8 L1194.9 478.5 L1196.7 489.3 L1198.4 478.5 L1200.1 496.0 L1201.9 479.6 L1203.6 485.9 L1205.4 481.1 L1207.1 478.2 L1208.9 482.0 L1210.6 481.0 L1212.4 479.3" fill="none" stroke="#0000ff" stroke-width="1.3" stroke-linejoin="round"/><path d="M875.3 481.1 L877.0 481.1 L878.8 481.1 L880.5 481.1 L882.3 481.1 L884.0 481.1 L885.8 481.1 L887.5 481.1 L889.3 481.1 L891.0 481.1 L892.8 481.1 L894.5 481.1 L896.3 481.1 L898.0 480.8 L899.8 481.3 L901.5 477.6 L903.2 478.7 L905.0 481.8 L906.7 474.9 L908.5 483.7 L910.2 479.0 L912.0 481.7 L913.7 480.8 L915.5 479.5 L917.2 480.6 L919.0 479.6 L920.7 487.3 L922.5 484.5 L924.2 479.7 L925.9 483.3 L927.7 483.4 L929.4 484.4 L931.2 490.3 L932.9 479.4 L934.7 477.8 L936.4 483.2 L938.2 481.1 L939.9 483.7 L941.7 479.4 L943.4 477.5 L945.2 483.1 L946.9 477.6 L948.7 478.8 L950.4 481.5 L952.1 485.5 L953.9 477.9 L955.6 481.3 L957.4 482.5 L959.1 480.2 L960.9 480.2 L962.6 477.7 L964.4 483.4 L966.1 478.5 L967.9 477.7 L969.6 477.8 L971.4 481.5 L973.1 482.8 L974.9 478.8 L976.6 480.8 L978.3 480.8 L980.1 477.9 L981.8 481.7 L983.6 486.3 L985.3 482.0 L987.1 485.3 L988.8 479.2 L990.6 480.4 L992.3 482.5 L994.1 481.1 L995.8 479.2 L997.6 480.9 L999.3 478.1 L1001.0 481.2 L1002.8 478.7 L1004.5 477.7 L1006.3 477.4 L1008.0 482.6 L1009.8 479.1 L1011.5 485.3 L1013.3 483.5 L1015.0 485.5 L1016.8 478.7 L1018.5 483.9 L1020.3 481.1 L1022.0 481.5 L1023.8 481.2 L1025.5 482.4 L1027.2 480.6 L1029.0 470.8 L1030.7 481.0 L1032.5 479.9 L1034.2 478.8 L1036.0 481.5 L1037.7 483.9 L1039.5 482.3 L1041.2 478.7 L1043.0 484.8 L1044.7 482.4 L1046.5 478.8 L1048.2 479.3 L1050.0 481.1 L1051.7 479.3 L1053.4 480.7 L1055.2 483.8 L1056.9 484.6 L1058.7 482.5 L1060.4 479.0 L1062.2 482.4 L1063.9 483.1 L1065.7 482.8 L1067.4 484.6 L1069.2 481.4 L1070.9 483.8 L1072.7 480.3 L1074.4 486.4 L1076.1 480.3 L1077.9 482.5 L1079.6 485.5 L1081.4 479.4 L1083.1 481.7 L1084.9 486.1 L1086.6 483.1 L1088.4 480.4 L1090.1 482.1 L1091.9 479.3 L1093.6 479.4 L1095.4 479.6 L1097.1 480.3 L1098.9 478.1 L1100.6 468.7 L1102.3 480.1 L1104.1 485.8 L1105.8 479.1 L1107.6 478.1 L1109.3 481.8 L1111.1 482.1 L1112.8 476.7 L1114.6 485.1 L1116.3 480.0 L1118.1 475.6 L1119.8 483.2 L1121.6 479.5 L1123.3 476.8 L1125.0 481.4 L1126.8 479.8 L1128.5 479.0 L1130.3 483.1 L1132.0 481.3 L1133.8 480.4 L1135.5 479.2 L1137.3 481.2 L1139.0 481.5 L1140.8 483.4 L1142.5 481.9 L1144.3 479.1 L1146.0 480.9 L1147.8 483.0 L1149.5 483.0 L1151.2 475.0 L1153.0 478.5 L1154.7 479.6 L1156.5 487.0 L1158.2 479.7 L1160.0 480.0 L1161.7 477.3 L1163.5 480.1 L1165.2 481.2 L1167.0 479.9 L1168.7 485.5 L1170.5 478.7 L1172.2 480.4 L1174.0 482.7 L1175.7 478.1 L1177.4 477.0 L1179.2 484.3 L1180.9 482.6 L1182.7 480.4 L1184.4 480.7 L1186.2 482.0 L1187.9 483.3 L1189.7 476.3 L1191.4 478.7 L1193.2 483.8 L1194.9 484.1 L1196.7 477.2 L1198.4 454.3 L1200.1 477.0 L1201.9 479.3 L1203.6 483.1 L1205.4 480.5 L1207.1 486.0 L1208.9 482.8 L1210.6 481.2 L1212.4 479.9" fill="none" stroke="#00ffff" stroke-width="1.3" stroke-linejoin="round"/><path d="M875.3 582.4 L877.0 582.4 L878.8 582.4 L880.5 582.4 L882.3 582.4 L884.0 582.4 L885.8 582.4 L887.5 582.4 L889.3 582.4 L891.0 582.4 L892.8 582.4 L894.5 582.4 L896.3 582.4 L898.0 583.9 L899.8 582.7 L901.5 581.5 L903.2 581.7 L905.0 581.1 L906.7 582.0 L908.5 583.1 L910.2 580.8 L912.0 582.3 L913.7 584.1 L915.5 583.7 L917.2 582.4 L919.0 582.7 L920.7 582.1 L922.5 582.4 L924.2 582.1 L925.9 582.7 L927.7 585.0 L929.4 581.6 L931.2 580.3 L932.9 581.5 L934.7 582.8 L936.4 581.5 L938.2 584.4 L939.9 586.3 L941.7 582.3 L943.4 584.4 L945.2 580.9 L946.9 584.7 L948.7 587.9 L950.4 584.6 L952.1 579.2 L953.9 583.2 L955.6 585.3 L957.4 584.0 L959.1 581.4 L960.9 581.4 L962.6 582.1 L964.4 579.4 L966.1 581.0 L967.9 582.5 L969.6 581.2 L971.4 579.0 L973.1 580.4 L974.9 578.3 L976.6 584.7 L978.3 582.7 L980.1 580.9 L981.8 583.1 L983.6 580.2 L985.3 581.2 L987.1 580.6 L988.8 582.9 L990.6 577.2 L992.3 579.9 L994.1 582.9 L995.8 582.3 L997.6 577.1 L999.3 583.1 L1001.0 580.6 L1002.8 580.4 L1004.5 588.6 L1006.3 584.8 L1008.0 582.1 L1009.8 581.7 L1011.5 580.1 L1013.3 580.8 L1015.0 582.4 L1016.8 580.7 L1018.5 581.3 L1020.3 582.0 L1022.0 585.5 L1023.8 582.9 L1025.5 581.0 L1027.2 584.6 L1029.0 583.7 L1030.7 582.4 L1032.5 585.5 L1034.2 583.3 L1036.0 586.6 L1037.7 583.8 L1039.5 581.3 L1041.2 581.3 L1043.0 582.6 L1044.7 582.9 L1046.5 585.4 L1048.2 578.7 L1050.0 581.4 L1051.7 580.2 L1053.4 584.3 L1055.2 582.8 L1056.9 586.2 L1058.7 580.8 L1060.4 580.5 L1062.2 586.3 L1063.9 582.5 L1065.7 581.1 L1067.4 586.1 L1069.2 586.2 L1070.9 584.6 L1072.7 583.7 L1074.4 585.3 L1076.1 582.4 L1077.9 581.9 L1079.6 581.1 L1081.4 581.0 L1083.1 579.3 L1084.9 580.0 L1086.6 585.1 L1088.4 583.5 L1090.1 575.8 L1091.9 584.7 L1093.6 576.3 L1095.4 582.4 L1097.1 581.4 L1098.9 586.6 L1100.6 585.0 L1102.3 582.5 L1104.1 582.9 L1105.8 583.1 L1107.6 582.6 L1109.3 584.0 L1111.1 581.0 L1112.8 581.7 L1114.6 582.6 L1116.3 583.8 L1118.1 582.8 L1119.8 588.0 L1121.6 584.5 L1123.3 582.4 L1125.0 585.5 L1126.8 582.0 L1128.5 582.1 L1130.3 585.3 L1132.0 583.0 L1133.8 583.1 L1135.5 581.5 L1137.3 581.2 L1139.0 582.5 L1140.8 584.2 L1142.5 582.7 L1144.3 582.6 L1146.0 580.9 L1147.8 581.8 L1149.5 583.9 L1151.2 585.2 L1153.0 583.2 L1154.7 584.0 L1156.5 584.7 L1158.2 582.7 L1160.0 583.5 L1161.7 582.2 L1163.5 581.4 L1165.2 583.3 L1167.0 577.7 L1168.7 583.1 L1170.5 580.2 L1172.2 582.2 L1174.0 580.1 L1175.7 587.3 L1177.4 584.0 L1179.2 581.9 L1180.9 581.2 L1182.7 577.6 L1184.4 581.8 L1186.2 579.8 L1187.9 580.9 L1189.7 580.5 L1191.4 581.4 L1193.2 582.8 L1194.9 581.4 L1196.7 584.7 L1198.4 580.0 L1200.1 584.5 L1201.9 581.9 L1203.6 578.1 L1205.4 582.9 L1207.1 582.4 L1208.9 580.0 L1210.6 582.4 L1212.4 584.1" fill="none" stroke="#ff0000" stroke-width="1.3" stroke-linejoin="round"/><rect x="1030" y="384" width="2" height="207" fill="#ff0000"/><rect x="878.5" y="392.5" width="194" height="65.5" rx="3" fill="#fff" fill-opacity="0.8" stroke="#d6d6d6" stroke-width="1"/><line x1="883" y1="403.5" x2="911" y2="403.5" stroke="#0000ff" stroke-width="1.5"/><line x1="883" y1="424.5" x2="911" y2="424.5" stroke="#00ffff" stroke-width="1.5"/><line x1="883" y1="445.5" x2="911" y2="445.5" stroke="#ff0000" stroke-width="1.5"/><rect x="870.5" y="384.5" width="357" height="207" fill="none" stroke="#000" stroke-width="1"/></svg><div class="t" style="left:922px;top:395px;font-size:15.5px">linear_acceleration.x</div><div class="t" style="left:922px;top:416px;font-size:15.5px">linear_acceleration.y</div><div class="t" style="left:922px;top:437px;font-size:15.5px">linear_acceleration.z</div><div class="t" style="right:421px;top:424px;font-size:15px">5</div><div class="t" style="right:421px;top:476px;font-size:15px">0</div><div class="t" style="right:421px;top:527px;font-size:15px">−5</div><div class="t" style="right:421px;top:578px;font-size:15px">−10</div><div class="t" style="left:815px;width:120px;text-align:center;top:599px;font-size:15px">0</div><div class="t" style="left:903px;width:120px;text-align:center;top:599px;font-size:15px">50</div><div class="t" style="left:990px;width:120px;text-align:center;top:599px;font-size:15px">100</div><div class="t" style="left:1077px;width:120px;text-align:center;top:599px;font-size:15px">150</div><div class="t" style="left:1165px;width:120px;text-align:center;top:599px;font-size:15px">200</div>
<svg class="a" style="left:0;top:0" width="1282" height="669"><path d="M826.8 345 L835.9 337.3 L845 345" fill="none" stroke="#000" stroke-width="2" stroke-linecap="round" stroke-linejoin="miter"/><rect x="840.2" y="337" width="2.8" height="4.5" fill="#000"/><path d="M829 344.2 L835.9 339.5 L843 344.2 L843 352.8 L838 352.8 L838 348 L834 348 L834 352.8 L829 352.8 Z" fill="#000"/><path d="M871 336 L861.8 343.8 L871 351.6 M862.5 343.8 L877.5 343.8" fill="none" stroke="#000" stroke-width="3.6" stroke-linecap="round" stroke-linejoin="round"/><path d="M901.2 336 L910.4 343.8 L901.2 351.6 M909.7 343.8 L894.5 343.8" fill="none" stroke="#666" stroke-width="3.6" stroke-linecap="round" stroke-linejoin="round"/><rect x="922.5" y="334" width="1" height="19" fill="#d4d4d4"/><rect x="1061.3" y="334" width="1" height="19" fill="#d4d4d4"/><path d="M942 334 V352.6 M932.5 343.3 H951.5" stroke="#000" stroke-width="3.2"/><path d="M942 331.9 L946.3 336.5 L937.7 336.5 Z M942 354.7 L946.3 350.1 L937.7 350.1 Z M930.6 343.3 L935.2 339 L935.2 347.6 Z M953.4 343.3 L948.8 339 L948.8 347.6 Z" fill="#000" stroke="#000" stroke-width="0.8" stroke-linejoin="round"/><rect x="959.5" y="328.5" width="31" height="29.5" rx="3" fill="#dcdcdc" stroke="#b8b8b8" stroke-width="1"/><circle cx="973.3" cy="341.8" r="7.2" fill="none" stroke="#000" stroke-width="3"/><path d="M978.8 347.3 L984.5 353" stroke="#000" stroke-width="3" stroke-linecap="round"/><path d="M998.5 337.9 H1017.5 M998.5 344.2 H1017.5 M998.5 350.6 H1017.5" stroke="#000" stroke-width="1.8"/><rect x="1001.4" y="335.2" width="4.9" height="5.5" rx="1" fill="#000"/><rect x="1009.8" y="341.5" width="4.9" height="5.5" rx="1" fill="#000"/><rect x="1003" y="347.9" width="4.9" height="5.5" rx="1" fill="#000"/><path d="M1029.5 333.8 V352.4 H1053" fill="none" stroke="#000" stroke-width="1.6"/><path d="M1032.4 348.2 L1038.7 341.8 L1041.6 346.4 L1049.5 338" fill="none" stroke="#000" stroke-width="2.8"/><path d="M1046.2 335.3 L1052.3 335.3 L1052.3 341.3 Z" fill="#000" stroke="#000" stroke-width="0.8" stroke-linejoin="round"/><path d="M1072 334.8 H1085.5 L1089.8 339 V352 H1072 Z" fill="none" stroke="#000" stroke-width="2" stroke-linejoin="round"/><rect x="1074.5" y="334" width="11" height="7.2" fill="#000"/><rect x="1080" y="335.5" width="3.2" height="4.6" fill="#efefef"/><rect x="1075.6" y="345.3" width="11" height="6.6" fill="none" stroke="#000" stroke-width="1.3"/><path d="M1230.5 340.5 L1233 343 L1230.5 345.5 M1234 340.5 L1236.5 343 L1234 345.5" fill="none" stroke="#8a8a8a" stroke-width="1"/></svg>
</body></html>
